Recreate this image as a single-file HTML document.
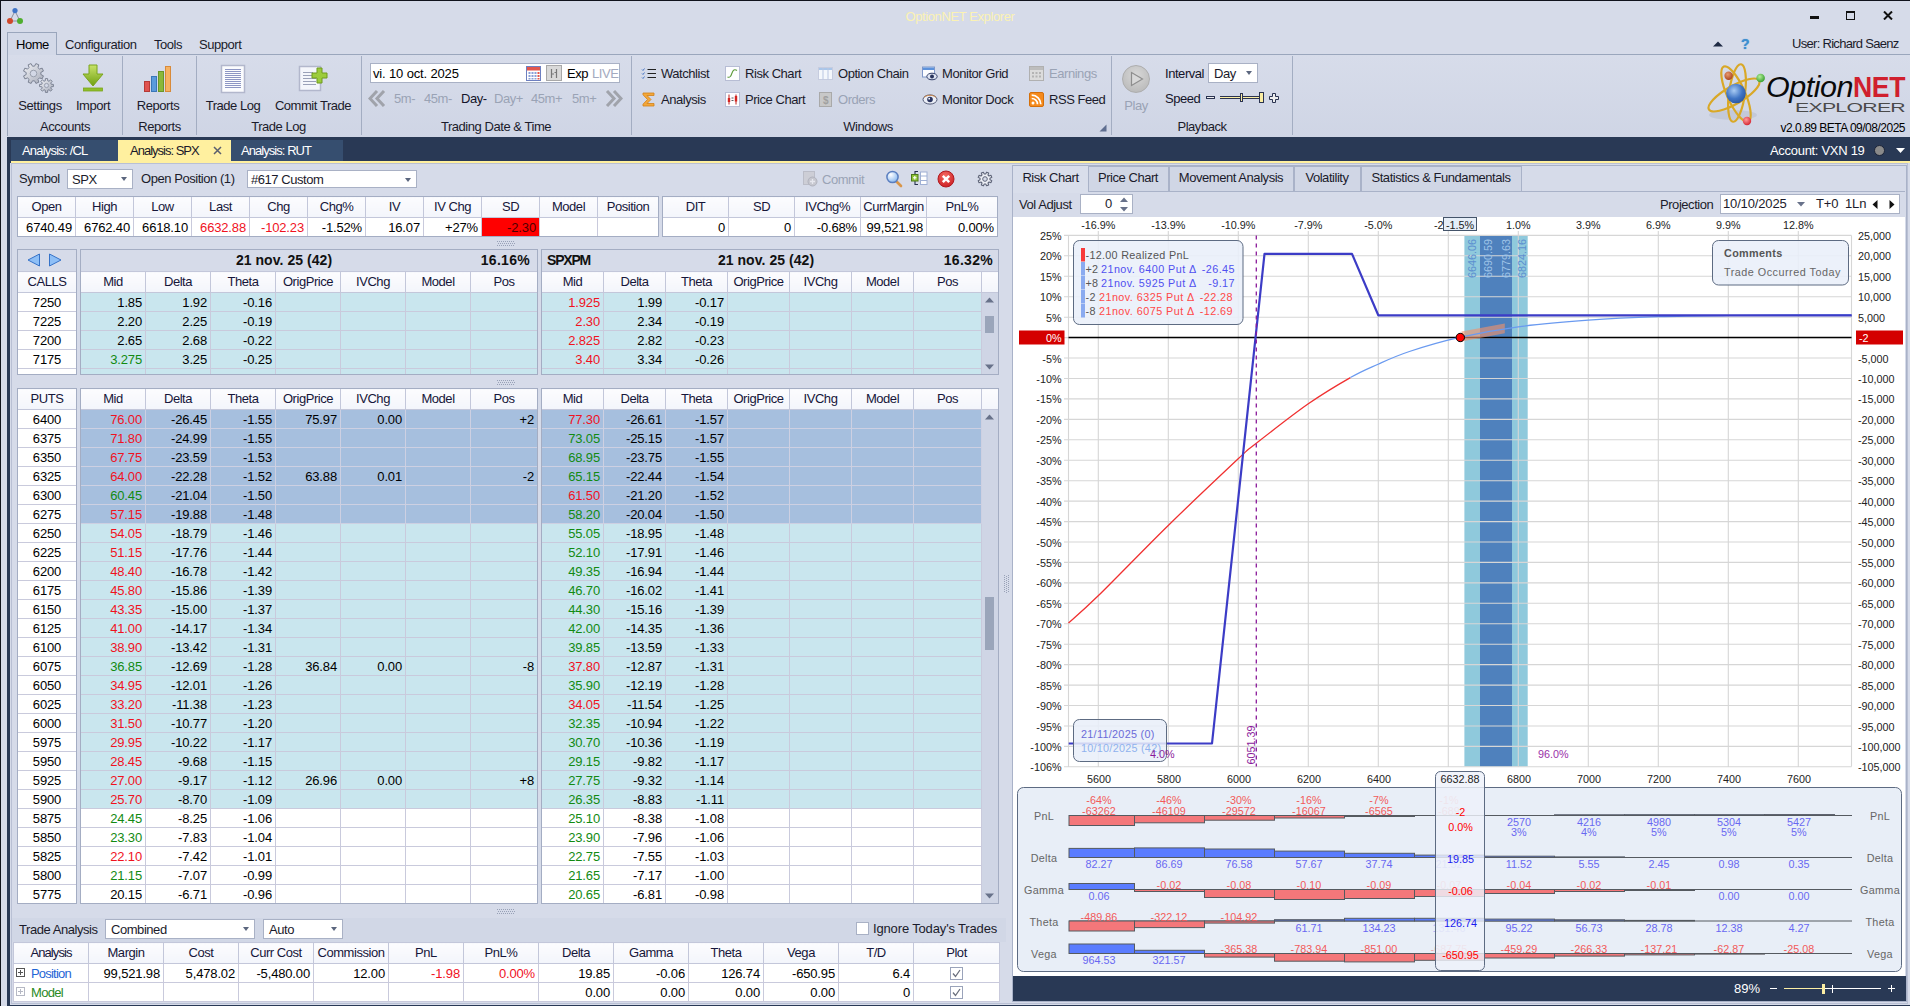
<!DOCTYPE html>
<html><head><meta charset="utf-8"><title>OptionNET Explorer</title>
<style>
*{box-sizing:border-box}
html,body{margin:0;padding:0}
body{width:1910px;height:1006px;overflow:hidden;background:#d6dbe9;font-family:"Liberation Sans",sans-serif;font-size:13px;color:#1b1b2b;letter-spacing:-0.45px;position:relative}
.a{position:absolute;white-space:nowrap}
.t{position:absolute;white-space:nowrap;line-height:16px;height:16px}
.c{text-align:center}
.r{text-align:right}
.n{letter-spacing:-0.15px}
.dim{color:#9aa3b5}
.sep{position:absolute;width:1px;background:#a3adc2;top:56px;height:79px}
.grp{position:absolute;top:119px;height:16px;line-height:16px;text-align:center;white-space:nowrap}
.combo{position:absolute;background:#fff;border:1px solid #a9b1c5;height:20px;line-height:20px;padding-left:5px;white-space:nowrap}
.combo:after{content:"";position:absolute;right:5px;top:7px;border:3.500px solid transparent;border-top:4px solid #5b667e;border-bottom:none}
table{border-collapse:collapse;table-layout:fixed;position:absolute;font-size:13px;letter-spacing:-0.15px}
td{color:#000;border:1px solid #c9cadc;height:19px;padding:0 3px 0 0;text-align:right;white-space:nowrap;overflow:hidden;line-height:17px}
tr.h td{color:#16163a;text-align:center;padding:0 0 2px 0;background:linear-gradient(#fcfcfe,#f3f5fb);height:21px;letter-spacing:-0.45px;border-color:#c3c7da}
.cy td{background:#c9e6ee}
.bl td{background:#a6bfde;border-color:#cdd0e2}
.wh td{background:#fff}
.red{color:#f0121e}
.grn{color:#128a12}
.box{position:absolute;border:1px solid #a4adc3}

</style></head><body>
<!-- window frame -->
<div class="a" style="left:0;top:0;width:1910px;height:1px;background:#10131c"></div>
<div class="a" style="left:0;top:0;width:1px;height:1006px;background:#10131c"></div>
<!-- app icon -->
<svg class="a" style="left:6px;top:7px" width="18" height="18" viewBox="0 0 18 18"><path d="M9 4 L4 14 L14 14 Z" fill="none" stroke="#8a8f9c" stroke-width="1"/><circle cx="9" cy="3.6" r="2.6" fill="#3f74c7"/><circle cx="4" cy="14" r="3" fill="#d0482a"/><circle cx="14" cy="14" r="3" fill="#4fae2e"/></svg>
<div class="t c" style="left:860px;width:200px;top:9px;color:#fbf2b4;letter-spacing:-0.4px">OptionNET Explorer</div>
<!-- window buttons -->
<div class="a" style="left:1810px;top:16px;width:9px;height:3px;background:#111"></div>
<div class="a" style="left:1846px;top:11px;width:9px;height:9px;border:1px solid #111;border-top-width:2px"></div>
<svg class="a" style="left:1883px;top:11px" width="10" height="9" viewBox="0 0 10 9"><path d="M1 0.5 L9 8.5 M9 0.5 L1 8.5" stroke="#111" stroke-width="2"/></svg>
<!-- ribbon tabs -->
<div class="a" style="left:7px;top:54px;width:1903px;height:1px;background:#9aa6bc"></div>
<div class="a" style="left:7px;top:32px;width:50px;height:23px;border:1px solid #9aa6bc;border-bottom:none;background:#d3d9e8"></div>
<div class="t" style="left:16px;top:37px;color:#000">Home</div>
<div class="t" style="left:65px;top:37px">Configuration</div>
<div class="t" style="left:154px;top:37px">Tools</div>
<div class="t" style="left:199px;top:37px">Support</div>
<svg class="a" style="left:1713px;top:41px" width="10" height="6"><path d="M0 5.5 L5 0.5 L10 5.5 Z" fill="#1e2a44"/></svg>
<div class="t" style="left:1741px;top:36px;color:#3f8fd0;font-weight:bold;font-size:14px;text-shadow:0 0 1px #3f8fd0">?</div>
<div class="t" style="left:1792px;top:36px;letter-spacing:-0.7px">User: Richard Saenz</div>
<!-- ribbon body -->
<div class="a" style="left:8px;top:55px;width:1902px;height:82px;background:linear-gradient(#d7dcea,#cfd5e5)"></div>
<div class="a" style="left:7px;top:55px;width:1px;height:81px;background:#9aa6bc"></div>
<div class="sep" style="left:122px"></div><div class="sep" style="left:196px"></div><div class="sep" style="left:361px"></div><div class="sep" style="left:631px"></div><div class="sep" style="left:1111px"></div><div class="sep" style="left:1292px"></div>
<!-- Settings icon -->
<svg class="a" style="left:22px;top:62px" width="34" height="32" viewBox="0 0 34 32"><defs><linearGradient id="gs" x1="0" y1="0" x2="1" y2="1"><stop offset="0" stop-color="#f2f3f7"/><stop offset="1" stop-color="#a6abb9"/></linearGradient></defs>
<path d="M18.83 12.52L21.42 13.85L20.21 16.81L17.43 15.93L15.96 17.41L16.85 20.18L13.91 21.41L12.56 18.82L10.48 18.83L9.15 21.42L6.19 20.21L7.07 17.43L5.59 15.96L2.82 16.85L1.59 13.91L4.18 12.56L4.17 10.48L1.58 9.15L2.79 6.19L5.57 7.07L7.04 5.59L6.15 2.82L9.09 1.59L10.44 4.18L12.52 4.17L13.85 1.58L16.81 2.79L15.93 5.57L17.41 7.04L20.18 6.15L21.41 9.09L18.82 10.44Z" fill="url(#gs)" stroke="#7c8394" stroke-width="1" stroke-linejoin="round"/><circle cx="11.500" cy="11.500" r="3.300" fill="#d3d8e6" stroke="#9aa0ae"/>
<path d="M29.25 22.28L31.41 22.40L31.41 24.60L29.25 24.72L28.72 25.99L30.16 27.61L28.61 29.16L26.99 27.72L25.72 28.25L25.60 30.41L23.40 30.41L23.28 28.25L22.01 27.72L20.39 29.16L18.84 27.61L20.28 25.99L19.75 24.72L17.59 24.60L17.59 22.40L19.75 22.28L20.28 21.01L18.84 19.39L20.39 17.84L22.01 19.28L23.28 18.75L23.40 16.59L25.60 16.59L25.72 18.75L26.99 19.28L28.61 17.84L30.16 19.39L28.72 21.01Z" fill="url(#gs)" stroke="#7c8394" stroke-width="1" stroke-linejoin="round"/><circle cx="24.500" cy="23.500" r="2.100" fill="#d3d8e6" stroke="#9aa0ae"/></svg>
<div class="t c" style="left:9px;width:62px;top:98px">Settings</div>
<!-- Import icon -->
<svg class="a" style="left:82px;top:64px" width="22" height="28" viewBox="0 0 22 28"><defs><linearGradient id="gi" x1="0" y1="0" x2="0" y2="1"><stop offset="0" stop-color="#c9e36a"/><stop offset="1" stop-color="#6fa012"/></linearGradient></defs><path d="M7 1h8v9h6L11 22 1 10h6z" fill="url(#gi)" stroke="#7aa51c" stroke-width="1"/><rect x="1.500" y="24" width="19" height="3" fill="#8fbf2a" stroke="#7aa51c" stroke-width=".8"/></svg>
<div class="t c" style="left:62px;width:62px;top:98px">Import</div>
<div class="grp" style="left:8px;width:114px">Accounts</div>
<!-- Reports icon -->
<svg class="a" style="left:143px;top:65px" width="30" height="28" viewBox="0 0 30 28"><rect x="1.500" y="16.500" width="5" height="10" fill="#e0534f" stroke="#b53a36"/><rect x="8.500" y="11.500" width="5" height="15" fill="#5b9bdc" stroke="#3a77b8"/><rect x="15.500" y="6.500" width="5" height="20" fill="#8ab83a" stroke="#6a962a"/><rect x="22.500" y="1.500" width="5" height="25" fill="#f6b262" stroke="#d88a3a"/></svg>
<div class="t c" style="left:127px;width:62px;top:98px">Reports</div>
<div class="grp" style="left:123px;width:73px">Reports</div>
<!-- Trade Log icon -->
<svg class="a" style="left:220px;top:64px" width="26" height="30" viewBox="0 0 26 30"><rect x="1.500" y="1.500" width="23" height="27" fill="#fbfcfe" stroke="#b2b7cc" stroke-width="1.500"/><g stroke="#8d96c4" stroke-width="1"><path d="M5 5.500h16M5 7.500h16M5 9.500h16M5 11.500h16M5 13.500h16M5 15.500h16M5 17.500h16M5 19.500h16M5 21.500h16M5 23.500h16"/></g></svg>
<div class="t c" style="left:196px;width:74px;top:98px">Trade Log</div>
<!-- Commit Trade icon -->
<svg class="a" style="left:298px;top:64px" width="30" height="30" viewBox="0 0 30 30"><rect x="1.500" y="2.500" width="21" height="24" fill="#f4f6fb" stroke="#b2b7cc" stroke-width="1.500"/><g stroke="#9aa1b8" stroke-width="1"><path d="M5 8.500h10M5 11.500h10M5 14.500h13M5 17.500h13M5 20.500h13"/></g><path d="M19 4h5v5h5v5h-5v5h-5v-5h-5v-5h5z" fill="#9ccc3c" stroke="#6f9a1e" stroke-width="1"/></svg>
<div class="t c" style="left:268px;width:90px;top:98px">Commit Trade</div>
<div class="grp" style="left:197px;width:163px">Trade Log</div>
<!-- Trading date & time -->
<div class="a" style="left:370px;top:63px;width:250px;height:20px;background:#fff;border:1px solid #a9b1c5"></div>
<div class="t n" style="left:373px;top:66px;color:#000">vi. 10 oct. 2025</div>
<svg class="a" style="left:526px;top:66px" width="15" height="15" viewBox="0 0 15 15"><rect x=".5" y=".5" width="14" height="14" fill="#fff" stroke="#6d7fc0"/><rect x="1" y="1" width="13" height="3.500" fill="#e2564c"/><g fill="#8aa0d8"><rect x="2.500" y="6" width="2" height="2"/><rect x="5.500" y="6" width="2" height="2"/><rect x="8.500" y="6" width="2" height="2"/><rect x="2.500" y="9" width="2" height="2"/><rect x="5.500" y="9" width="2" height="2"/><rect x="8.500" y="9" width="2" height="2"/><rect x="2.500" y="12" width="2" height="1.500"/><rect x="5.500" y="12" width="2" height="1.500"/><rect x="8.500" y="12" width="2" height="1.500"/></g><g fill="#e2564c"><rect x="11.500" y="6" width="2" height="2"/><rect x="11.500" y="9" width="2" height="2"/><rect x="11.500" y="12" width="2" height="1.500"/></g></svg>
<div class="a" style="left:546px;top:65px;width:16px;height:16px;background:#d9d9d9;border:1px solid #a8a8a8"></div>
<svg class="a" style="left:549px;top:69px" width="10" height="9"><path d="M2.500 0v9M7.500 0v9M2.500 5h2.500M5.500 3.500h2" stroke="#777" stroke-width="1.200" fill="none"/></svg>
<div class="t" style="left:567px;top:66px;color:#000">Exp</div>
<div class="t" style="left:592px;top:66px;color:#a3aac0">LIVE</div>
<svg class="a" style="left:368px;top:90px" width="18" height="17" viewBox="0 0 18 17"><path d="M9 1 L2 8.500 L9 16 M16 1 L9 8.500 L16 16" fill="none" stroke="#a0a3ab" stroke-width="3"/></svg>
<svg class="a" style="left:605px;top:90px" width="18" height="17" viewBox="0 0 18 17"><path d="M2 1 L9 8.500 L2 16 M9 1 L16 8.500 L9 16" fill="none" stroke="#a0a3ab" stroke-width="3"/></svg>
<div class="t dim" style="left:394px;top:91px">5m-</div>
<div class="t dim" style="left:424px;top:91px">45m-</div>
<div class="t" style="left:461px;top:91px;color:#14142a">Day-</div>
<div class="t dim" style="left:494px;top:91px">Day+</div>
<div class="t dim" style="left:531px;top:91px">45m+</div>
<div class="t dim" style="left:572px;top:91px">5m+</div>
<div class="grp" style="left:361px;width:270px">Trading Date &amp; Time</div>
<!-- Windows group -->
<svg class="a" style="left:641px;top:67px" width="16" height="13"><g stroke="#222" stroke-width="1.200"><path d="M6.500 2.500h8.500M6.500 6.500h8.500M6.500 10.500h8.500"/></g><g fill="none" stroke="#4a78c8" stroke-width="1"><path d="M1 2.500l1 1 1.500-2M1 6.500l1 1 1.500-2M1 10.500l1 1 1.500-2"/></g></svg>
<div class="t" style="left:661px;top:66px">Watchlist</div>
<svg class="a" style="left:642px;top:92px" width="13" height="15" viewBox="0 0 13 15"><path d="M1 1h11v2.500H5l4 4-4 4h7V14H1v-1.800l4.500-4.700L1 2.800z" fill="#f3a73a" stroke="#d28018" stroke-width=".8"/></svg>
<div class="t" style="left:661px;top:92px">Analysis</div>
<svg class="a" style="left:725px;top:66px" width="15" height="15"><rect x=".5" y=".5" width="14" height="14" fill="#fdfdff" stroke="#b7bdd4"/><path d="M2.500 11c2.500 1 3.500-1 4.500-4s2.500-4 5-2.500" fill="none" stroke="#5b9a3a" stroke-width="1.100"/></svg>
<div class="t" style="left:745px;top:66px">Risk Chart</div>
<svg class="a" style="left:725px;top:92px" width="15" height="15"><rect x=".5" y=".5" width="14" height="14" fill="#fdfdff" stroke="#b7bdd4"/><path d="M4 2.500v10M11 2.500v10" stroke="#c0201c" stroke-width="1"/><rect x="2.800" y="6" width="2.400" height="4" fill="#d4231f"/><rect x="9.800" y="4" width="2.400" height="5.500" fill="#d4231f"/><path d="M6.500 6h2M6.500 8.500h2" stroke="#333" stroke-width=".8"/></svg>
<div class="t" style="left:745px;top:92px">Price Chart</div>
<svg class="a" style="left:818px;top:67px" width="15" height="13"><rect x=".5" y=".5" width="14" height="12" fill="#f4f7fc" stroke="#c6ccdf"/><rect x="1" y="1" width="13" height="2" fill="#a9c6ea"/><path d="M5 1v11.500M10 1v11.500" stroke="#b9c6e2"/></svg>
<div class="t" style="left:838px;top:66px">Option Chain</div>
<svg class="a" style="left:819px;top:92px" width="13" height="15"><rect x=".5" y=".5" width="12" height="14" fill="#c8c8c8" stroke="#a9a9a9"/><text x="6.500" y="11.500" font-size="10" font-family="Liberation Sans" font-weight="bold" text-anchor="middle" fill="#a0a0a0">$</text></svg>
<div class="t dim" style="left:838px;top:92px">Orders</div>
<svg class="a" style="left:922px;top:66px" width="16" height="15"><rect x=".5" y="1" width="12" height="10" fill="#fbfcff" stroke="#7f97c8"/><rect x="1" y="1.500" width="11" height="2.500" fill="#5d92dc"/><ellipse cx="10" cy="10.500" rx="5.200" ry="3.300" fill="#dfe5f3" stroke="#34406a"/><circle cx="10" cy="10.500" r="2" fill="#28335c"/></svg>
<div class="t" style="left:942px;top:66px">Monitor Grid</div>
<svg class="a" style="left:922px;top:93px" width="16" height="13"><ellipse cx="8" cy="6.500" rx="7" ry="4.600" fill="#eceff7" stroke="#555c78"/><path d="M2 4.500c3-3 9-3 12 0" stroke="#d08a4a" fill="none"/><circle cx="8" cy="6.500" r="2.800" fill="#2b3560"/><circle cx="7.200" cy="5.700" r=".9" fill="#fff"/></svg>
<div class="t" style="left:942px;top:92px">Monitor Dock</div>
<svg class="a" style="left:1029px;top:66px" width="15" height="15"><rect x=".5" y=".5" width="14" height="14" fill="#dcdcdc" stroke="#b0b0b0"/><rect x="1" y="1" width="13" height="3" fill="#bdbdbd"/><g fill="#b4b4b4"><rect x="3" y="6" width="2" height="2"/><rect x="6.500" y="6" width="2" height="2"/><rect x="10" y="6" width="2" height="2"/><rect x="3" y="9.500" width="2" height="2"/><rect x="6.500" y="9.500" width="2" height="2"/><rect x="10" y="9.500" width="2" height="2"/></g></svg>
<div class="t dim" style="left:1049px;top:66px">Earnings</div>
<svg class="a" style="left:1029px;top:92px" width="15" height="15"><rect x=".5" y=".5" width="14" height="14" rx="1.500" fill="#f58a1c" stroke="#d46f0a"/><circle cx="4" cy="11" r="1.500" fill="#fff"/><path d="M2.700 6.500a5.800 5.800 0 0 1 5.800 5.800M2.700 3.200a9.100 9.100 0 0 1 9.100 9.100" stroke="#fff" stroke-width="1.700" fill="none"/></svg>
<div class="t" style="left:1049px;top:92px">RSS Feed</div>
<div class="grp" style="left:632px;width:472px">Windows</div>
<svg class="a" style="left:1099px;top:124px" width="8" height="8"><path d="M7.500 0.500V7.500H0.500Z" fill="#5f6e90"/></svg>
<!-- Playback -->
<div class="a" style="left:1122px;top:65px;width:28px;height:28px;border-radius:50%;background:radial-gradient(circle at 50% 35%,#d8d8d8,#b4b4b4);border:1px solid #adadad"></div>
<svg class="a" style="left:1130px;top:71px" width="14" height="16"><path d="M1.500 1.500v13l11-6.500z" fill="#d9d9d9" stroke="#8e8e8e" stroke-width="1.200"/></svg>
<div class="t dim c" style="left:1115px;width:42px;top:98px">Play</div>
<div class="t" style="left:1165px;top:66px;color:#14142a">Interval</div>
<div class="combo" style="left:1208px;top:63px;width:50px">Day</div>
<div class="t" style="left:1165px;top:91px;color:#14142a">Speed</div>
<div class="a" style="left:1206px;top:96px;width:9px;height:3px;border:1px solid #2a3350;background:#eee"></div>
<div class="a" style="left:1220px;top:96px;width:42px;height:3px;border:1px solid #2a3350;background:#fbeea4;border-left:none;border-right:none"></div>
<div class="a" style="left:1240px;top:93px;width:3px;height:9px;border:1px solid #2a3350;background:#fbeea4"></div>
<div class="a" style="left:1259px;top:92px;width:5px;height:11px;border:1px solid #2a3350;background:#fbeea4"></div>
<svg class="a" style="left:1269px;top:93px" width="10" height="10"><path d="M3.500 .5h3v3h3v3h-3v3h-3v-3h-3v-3h3z" fill="#eee" stroke="#2a3350"/></svg>
<div class="grp" style="left:1112px;width:180px">Playback</div>
<!-- Logo -->
<svg class="a" style="left:1700px;top:58px" width="210" height="78" viewBox="0 0 210 78">
<defs><radialGradient id="gb" cx=".4" cy=".35" r=".7"><stop offset="0" stop-color="#a9cbf3"/><stop offset=".6" stop-color="#3f74c4"/><stop offset="1" stop-color="#2a55a0"/></radialGradient>
<radialGradient id="gr" cx=".4" cy=".35" r=".7"><stop offset="0" stop-color="#ff9a9a"/><stop offset="1" stop-color="#d3202c"/></radialGradient>
<radialGradient id="gg" cx=".4" cy=".35" r=".7"><stop offset="0" stop-color="#b4f09a"/><stop offset="1" stop-color="#2f9a28"/></radialGradient>
<radialGradient id="go" cx=".4" cy=".35" r=".7"><stop offset="0" stop-color="#e89a70"/><stop offset="1" stop-color="#a8401c"/></radialGradient></defs>
<ellipse cx="33" cy="57" rx="24" ry="5" fill="#b9bfd0" opacity=".6"/>
<g fill="none" stroke="#d9a827" stroke-width="2.200"><ellipse cx="36" cy="36" rx="9" ry="30" transform="rotate(-24 36 36)"/><ellipse cx="34" cy="37" rx="9" ry="29" transform="rotate(60 34 37)"/><ellipse cx="37" cy="35" rx="8" ry="29" transform="rotate(8 37 35)"/></g>
<circle cx="36" cy="35.500" r="9.800" fill="url(#gb)"/><circle cx="28.600" cy="17.700" r="4.200" fill="url(#go)"/><circle cx="60.600" cy="20" r="4.300" fill="url(#gg)"/><circle cx="47" cy="63" r="4.200" fill="url(#gr)"/>
<text x="66" y="39" font-family="Liberation Sans" font-style="italic" font-size="29" fill="#0a0a0a" textLength="87" lengthAdjust="spacingAndGlyphs">Option</text>
<text x="153" y="39" font-family="Liberation Sans" font-weight="bold" font-size="29" fill="#d01f2e" textLength="52" lengthAdjust="spacingAndGlyphs">NET</text>
<text x="95" y="53.700" font-family="Liberation Sans" font-size="13.500" fill="#4a4a4a" textLength="110" lengthAdjust="spacingAndGlyphs">EXPLORER</text>
</svg>
<div class="t r" style="left:1760px;width:145px;top:120px;color:#000;font-size:12px;letter-spacing:-0.5px">v2.0.89 BETA 09/08/2025</div>
<!-- dark bar with doc tabs -->
<div class="a" style="left:7px;top:137px;width:1903px;height:26px;background:#293955"></div>
<div class="a" style="left:7px;top:137px;width:3px;height:869px;background:#293955"></div>
<div class="a" style="left:11px;top:140px;width:107px;height:21px;background:#364e6f"></div>
<div class="a" style="left:118px;top:140px;width:113px;height:23px;background:#fff09f"></div>
<div class="a" style="left:231px;top:140px;width:112px;height:21px;background:#364e6f"></div>
<div class="a" style="left:11px;top:161px;width:1899px;height:2px;background:#fff09f"></div>
<div class="t" style="left:22px;top:143px;color:#fff;letter-spacing:-0.8px">Analysis: /CL</div>
<div class="t" style="left:130px;top:143px;color:#1a1a2a;letter-spacing:-1px">Analysis: SPX</div>
<svg class="a" style="left:213px;top:146px" width="9" height="9"><path d="M1 1l7 7M8 1l-7 7" stroke="#5a5f6e" stroke-width="1.500"/></svg>
<div class="t" style="left:241px;top:143px;color:#fff;letter-spacing:-0.95px">Analysis: RUT</div>
<div class="t" style="left:1770px;top:143px;color:#fff;letter-spacing:-0.3px">Account: VXN 19</div>
<div class="a" style="left:1874px;top:145px;width:11px;height:11px;border-radius:50%;background:#8a8a8a;border:1px solid #1c2438"></div>
<svg class="a" style="left:1896px;top:148px" width="9" height="5"><path d="M0 0h9l-4.500 5z" fill="#fff"/></svg>
<div class="a" style="left:11px;top:163px;width:1897px;height:840px;border:1px solid #b9c0d4;border-right:none;border-bottom:none"></div>
<div class="t" style="left:19px;top:171px">Symbol</div>
<div class="combo" style="left:67px;top:169px;width:66px;padding-left:4px">SPX</div>
<div class="t" style="left:141px;top:171px">Open Position (1)</div>
<div class="combo" style="left:247px;top:170px;width:170px;height:18px;line-height:17px;padding-left:3px">#617 Custom</div>
<svg class="a" style="left:803px;top:171px" width="15" height="16"><rect x=".5" y=".5" width="11" height="13" fill="#cdced6" stroke="#bbbdc8"/><circle cx="9.500" cy="10.500" r="4.500" fill="#c6c7cf" stroke="#b0b2bd"/><path d="M7 10.500h5M9.500 8v5" stroke="#e6e7ee" stroke-width="1.300"/></svg>
<div class="t dim" style="left:822px;top:172px">Commit</div>
<svg class="a" style="left:885px;top:170px" width="18" height="18"><defs><radialGradient id="gm" cx=".35" cy=".3" r=".8"><stop offset="0" stop-color="#fff"/><stop offset="1" stop-color="#7fb2ee"/></radialGradient></defs><path d="M11 11l5 5" stroke="#d9964a" stroke-width="2.600" stroke-linecap="round"/><circle cx="7.500" cy="7" r="5.600" fill="url(#gm)" stroke="#5b7fc0" stroke-width="1.500"/></svg>
<svg class="a" style="left:911px;top:171px" width="17" height="15"><path d="M7 .5h-3v13h3" fill="none" stroke="#27314f" stroke-width="1.100"/><rect x="9.500" y="1" width="6.500" height="12.500" fill="#fff" stroke="#9fb0d4"/><path d="M9.500 5h6.500M9.500 9.500h6.500" stroke="#9fb0d4" stroke-width="1"/><rect x=".5" y="3.500" width="6.500" height="6.500" fill="#8fc43a" stroke="#4d7a18"/><path d="M2 6.800h3.500M3.800 5v3.500" stroke="#fff" stroke-width="1.100"/></svg>
<svg class="a" style="left:937px;top:170px" width="18" height="18"><defs><radialGradient id="gx" cx=".45" cy=".3" r=".8"><stop offset="0" stop-color="#f46a62"/><stop offset="1" stop-color="#c8161c"/></radialGradient></defs><circle cx="9" cy="9" r="8" fill="url(#gx)" stroke="#b01a20"/><path d="M5.800 5.800l6.400 6.400M12.200 5.800l-6.400 6.400" stroke="#fff" stroke-width="2.500"/></svg>
<svg class="a" style="left:977px;top:171px" width="16" height="16" viewBox="0 0 16 16"><path d="M12.95 8.69L14.81 9.62L13.98 11.64L12.01 10.99L11.01 11.99L11.67 13.96L9.65 14.80L8.72 12.95L7.31 12.95L6.38 14.81L4.36 13.98L5.01 12.01L4.01 11.01L2.04 11.67L1.20 9.65L3.05 8.72L3.05 7.31L1.19 6.38L2.02 4.36L3.99 5.01L4.99 4.01L4.33 2.04L6.35 1.20L7.28 3.05L8.69 3.05L9.62 1.19L11.64 2.02L10.99 3.99L11.99 4.99L13.96 4.33L14.80 6.35L12.95 7.28Z" fill="#eef0f6" stroke="#5f6579" stroke-width="1.100" stroke-linejoin="round"/><circle cx="8" cy="8" r="2.300" fill="#d6dbe9" stroke="#5f6579" stroke-width="1"/></svg>
<table style="left:17px;top:196px;width:642px;"><colgroup><col style="width:58px"><col style="width:58px"><col style="width:58px"><col style="width:58px"><col style="width:58px"><col style="width:58px"><col style="width:58px"><col style="width:58px"><col style="width:58px"><col style="width:58px"><col style="width:61px"></colgroup><tr class="h" style="height:21px"><td style="height:21px">Open</td><td style="height:21px">High</td><td style="height:21px">Low</td><td style="height:21px">Last</td><td style="height:21px">Chg</td><td style="height:21px">Chg%</td><td style="height:21px">IV</td><td style="height:21px">IV Chg</td><td style="height:21px">SD</td><td style="height:21px">Model</td><td style="height:21px">Position</td></tr><tr class="wh" style="height:19px"><td style="height:19px">6740.49</td><td style="height:19px">6762.40</td><td style="height:19px">6618.10</td><td class="red" style="height:19px">6632.88</td><td class="red" style="height:19px">-102.23</td><td style="height:19px">-1.52%</td><td style="height:19px">16.07</td><td style="height:19px">+27%</td><td style="height:19px;background:#f00;color:#500000">-2.30</td><td style="height:19px"></td><td style="height:19px"></td></tr></table>
<table style="left:662px;top:196px;width:336px;"><colgroup><col style="width:66px"><col style="width:66px"><col style="width:66px"><col style="width:66px"><col style="width:71px"></colgroup><tr class="h" style="height:21px"><td style="height:21px">DIT</td><td style="height:21px">SD</td><td style="height:21px">IVChg%</td><td style="height:21px">CurrMargin</td><td style="height:21px">PnL%</td></tr><tr class="wh" style="height:19px"><td style="height:19px">0</td><td style="height:19px">0</td><td style="height:19px">-0.68%</td><td style="height:19px">99,521.98</td><td style="height:19px">0.00%</td></tr></table>
<svg class="a" style="left:497px;top:241px" width="19" height="5" fill="#98a1b7"><rect x="0" y="0" width="1" height="1"/><rect x="2" y="0" width="1" height="1"/><rect x="4" y="0" width="1" height="1"/><rect x="6" y="0" width="1" height="1"/><rect x="8" y="0" width="1" height="1"/><rect x="10" y="0" width="1" height="1"/><rect x="12" y="0" width="1" height="1"/><rect x="14" y="0" width="1" height="1"/><rect x="16" y="0" width="1" height="1"/><rect x="1" y="2" width="1" height="1"/><rect x="3" y="2" width="1" height="1"/><rect x="5" y="2" width="1" height="1"/><rect x="7" y="2" width="1" height="1"/><rect x="9" y="2" width="1" height="1"/><rect x="11" y="2" width="1" height="1"/><rect x="13" y="2" width="1" height="1"/><rect x="15" y="2" width="1" height="1"/><rect x="17" y="2" width="1" height="1"/><rect x="0" y="4" width="1" height="1"/><rect x="2" y="4" width="1" height="1"/><rect x="4" y="4" width="1" height="1"/><rect x="6" y="4" width="1" height="1"/><rect x="8" y="4" width="1" height="1"/><rect x="10" y="4" width="1" height="1"/><rect x="12" y="4" width="1" height="1"/><rect x="14" y="4" width="1" height="1"/><rect x="16" y="4" width="1" height="1"/></svg>
<svg class="a" style="left:497px;top:380px" width="19" height="5" fill="#98a1b7"><rect x="0" y="0" width="1" height="1"/><rect x="2" y="0" width="1" height="1"/><rect x="4" y="0" width="1" height="1"/><rect x="6" y="0" width="1" height="1"/><rect x="8" y="0" width="1" height="1"/><rect x="10" y="0" width="1" height="1"/><rect x="12" y="0" width="1" height="1"/><rect x="14" y="0" width="1" height="1"/><rect x="16" y="0" width="1" height="1"/><rect x="1" y="2" width="1" height="1"/><rect x="3" y="2" width="1" height="1"/><rect x="5" y="2" width="1" height="1"/><rect x="7" y="2" width="1" height="1"/><rect x="9" y="2" width="1" height="1"/><rect x="11" y="2" width="1" height="1"/><rect x="13" y="2" width="1" height="1"/><rect x="15" y="2" width="1" height="1"/><rect x="17" y="2" width="1" height="1"/><rect x="0" y="4" width="1" height="1"/><rect x="2" y="4" width="1" height="1"/><rect x="4" y="4" width="1" height="1"/><rect x="6" y="4" width="1" height="1"/><rect x="8" y="4" width="1" height="1"/><rect x="10" y="4" width="1" height="1"/><rect x="12" y="4" width="1" height="1"/><rect x="14" y="4" width="1" height="1"/><rect x="16" y="4" width="1" height="1"/></svg>
<svg class="a" style="left:497px;top:909px" width="19" height="5" fill="#98a1b7"><rect x="0" y="0" width="1" height="1"/><rect x="2" y="0" width="1" height="1"/><rect x="4" y="0" width="1" height="1"/><rect x="6" y="0" width="1" height="1"/><rect x="8" y="0" width="1" height="1"/><rect x="10" y="0" width="1" height="1"/><rect x="12" y="0" width="1" height="1"/><rect x="14" y="0" width="1" height="1"/><rect x="16" y="0" width="1" height="1"/><rect x="1" y="2" width="1" height="1"/><rect x="3" y="2" width="1" height="1"/><rect x="5" y="2" width="1" height="1"/><rect x="7" y="2" width="1" height="1"/><rect x="9" y="2" width="1" height="1"/><rect x="11" y="2" width="1" height="1"/><rect x="13" y="2" width="1" height="1"/><rect x="15" y="2" width="1" height="1"/><rect x="17" y="2" width="1" height="1"/><rect x="0" y="4" width="1" height="1"/><rect x="2" y="4" width="1" height="1"/><rect x="4" y="4" width="1" height="1"/><rect x="6" y="4" width="1" height="1"/><rect x="8" y="4" width="1" height="1"/><rect x="10" y="4" width="1" height="1"/><rect x="12" y="4" width="1" height="1"/><rect x="14" y="4" width="1" height="1"/><rect x="16" y="4" width="1" height="1"/></svg>
<div class="box" style="left:17px;top:249px;width:60px;height:126px;background:#fff;overflow:hidden"></div>
<div class="a" style="left:18px;top:250px;width:58px;height:21px;background:#d6dbe9"></div>
<svg class="a" style="left:27px;top:253px" width="36" height="14"><path d="M12.500 1v12L1 7z" fill="#8ebff6" stroke="#3572c8"/><path d="M22.500 1v12L34 7z" fill="#8ebff6" stroke="#3572c8"/></svg>
<table style="left:17px;top:271px;width:60px;overflow:hidden"><colgroup><col style="width:59px"></colgroup><tr class="h" style="height:21px"><td style="height:21px">CALLS</td></tr><tr class="wh" style="height:19px"><td style="height:19px;text-align:center;padding:0;height:19px">7250</td></tr><tr class="wh" style="height:19px"><td style="height:19px;text-align:center;padding:0;height:19px">7225</td></tr><tr class="wh" style="height:19px"><td style="height:19px;text-align:center;padding:0;height:19px">7200</td></tr><tr class="wh" style="height:19px"><td style="height:19px;text-align:center;padding:0;height:19px">7175</td></tr><tr class="wh" style="height:6px"><td style="height:6px;text-align:center;padding:0;height:6px"></td></tr></table>
<div class="box" style="left:80px;top:249px;width:458px;height:126px;background:#c9e6ee"></div>
<div class="a" style="left:81px;top:250px;width:456px;height:21px;background:#d6dbe9"></div>
<div class="t c" style="left:206px;width:156px;top:252px;font-weight:bold;font-size:14px;color:#111;letter-spacing:0.05px">21 nov. 25 (42)</div>
<div class="t r" style="left:450px;width:80px;top:252px;font-weight:bold;font-size:14px;color:#111;letter-spacing:0.3px">16.16%</div>
<table style="left:80px;top:271px;width:458px;"><colgroup><col style="width:65px"><col style="width:65px"><col style="width:65px"><col style="width:65px"><col style="width:65px"><col style="width:65px"><col style="width:67px"></colgroup><tr class="h" style="height:21px"><td style="height:21px">Mid</td><td style="height:21px">Delta</td><td style="height:21px">Theta</td><td style="height:21px">OrigPrice</td><td style="height:21px">IVChg</td><td style="height:21px">Model</td><td style="height:21px">Pos</td></tr><tr class="cy" style="height:19px"><td style="height:19px">1.85</td><td style="height:19px">1.92</td><td style="height:19px">-0.16</td><td style="height:19px"></td><td style="height:19px"></td><td style="height:19px"></td><td style="height:19px"></td></tr><tr class="cy" style="height:19px"><td style="height:19px">2.20</td><td style="height:19px">2.25</td><td style="height:19px">-0.19</td><td style="height:19px"></td><td style="height:19px"></td><td style="height:19px"></td><td style="height:19px"></td></tr><tr class="cy" style="height:19px"><td style="height:19px">2.65</td><td style="height:19px">2.68</td><td style="height:19px">-0.22</td><td style="height:19px"></td><td style="height:19px"></td><td style="height:19px"></td><td style="height:19px"></td></tr><tr class="cy" style="height:19px"><td class="grn" style="height:19px">3.275</td><td style="height:19px">3.25</td><td style="height:19px">-0.25</td><td style="height:19px"></td><td style="height:19px"></td><td style="height:19px"></td><td style="height:19px"></td></tr><tr class="cy" style="height:6px"><td style="height:6px"></td><td style="height:6px"></td><td style="height:6px"></td><td style="height:6px"></td><td style="height:6px"></td><td style="height:6px"></td><td style="height:6px"></td></tr></table>
<div class="box" style="left:541px;top:249px;width:458px;height:126px;background:#d6dbe9"></div>
<div class="t" style="left:547px;top:252px;font-weight:bold;font-size:14px;color:#111;letter-spacing:-1.2px">SPXPM</div>
<div class="t c" style="left:688px;width:156px;top:252px;font-weight:bold;font-size:14px;color:#111;letter-spacing:0.05px">21 nov. 25 (42)</div>
<div class="t r" style="left:913px;width:80px;top:252px;font-weight:bold;font-size:14px;color:#111;letter-spacing:0.3px">16.32%</div>
<table style="left:541px;top:271px;width:458px;"><colgroup><col style="width:62px"><col style="width:62px"><col style="width:62px"><col style="width:62px"><col style="width:62px"><col style="width:62px"><col style="width:68px"><col style="width:17px"></colgroup><tr class="h" style="height:21px"><td style="height:21px">Mid</td><td style="height:21px">Delta</td><td style="height:21px">Theta</td><td style="height:21px">OrigPrice</td><td style="height:21px">IVChg</td><td style="height:21px">Model</td><td style="height:21px">Pos</td><td style="height:21px"></td></tr><tr class="cy" style="height:19px"><td class="red" style="height:19px">1.925</td><td style="height:19px">1.99</td><td style="height:19px">-0.17</td><td style="height:19px"></td><td style="height:19px"></td><td style="height:19px"></td><td style="height:19px"></td><td style="height:19px;background:#cfd5e5;border-color:#cfd5e5;border-right-color:#a4adc3"></td></tr><tr class="cy" style="height:19px"><td class="red" style="height:19px">2.30</td><td style="height:19px">2.34</td><td style="height:19px">-0.19</td><td style="height:19px"></td><td style="height:19px"></td><td style="height:19px"></td><td style="height:19px"></td><td style="height:19px;background:#cfd5e5;border-color:#cfd5e5;border-right-color:#a4adc3"></td></tr><tr class="cy" style="height:19px"><td class="red" style="height:19px">2.825</td><td style="height:19px">2.82</td><td style="height:19px">-0.23</td><td style="height:19px"></td><td style="height:19px"></td><td style="height:19px"></td><td style="height:19px"></td><td style="height:19px;background:#cfd5e5;border-color:#cfd5e5;border-right-color:#a4adc3"></td></tr><tr class="cy" style="height:19px"><td class="red" style="height:19px">3.40</td><td style="height:19px">3.34</td><td style="height:19px">-0.26</td><td style="height:19px"></td><td style="height:19px"></td><td style="height:19px"></td><td style="height:19px"></td><td style="height:19px;background:#cfd5e5;border-color:#cfd5e5;border-right-color:#a4adc3"></td></tr><tr class="cy" style="height:6px"><td style="height:6px"></td><td style="height:6px"></td><td style="height:6px"></td><td style="height:6px"></td><td style="height:6px"></td><td style="height:6px"></td><td style="height:6px"></td><td style="height:6px;background:#cfd5e5;border-color:#cfd5e5;border-right-color:#a4adc3"></td></tr></table>
<svg class="a" style="left:985px;top:297px" width="10" height="6"><path d="M0 5.500h9L4.500 .5z" fill="#68728a"/></svg>
<div class="a" style="left:985px;top:316px;width:9px;height:17px;background:#9aa5ba"></div>
<svg class="a" style="left:985px;top:364px" width="10" height="6"><path d="M0 .5h9L4.500 5.500z" fill="#68728a"/></svg>
<table style="left:17px;top:388px;width:60px;"><colgroup><col style="width:59px"></colgroup><tr class="h" style="height:21px"><td style="height:21px">PUTS</td></tr><tr class="wh" style="height:19px"><td style="height:19px;text-align:center;padding:0;height:19px">6400</td></tr><tr class="wh" style="height:19px"><td style="height:19px;text-align:center;padding:0;height:19px">6375</td></tr><tr class="wh" style="height:19px"><td style="height:19px;text-align:center;padding:0;height:19px">6350</td></tr><tr class="wh" style="height:19px"><td style="height:19px;text-align:center;padding:0;height:19px">6325</td></tr><tr class="wh" style="height:19px"><td style="height:19px;text-align:center;padding:0;height:19px">6300</td></tr><tr class="wh" style="height:19px"><td style="height:19px;text-align:center;padding:0;height:19px">6275</td></tr><tr class="wh" style="height:19px"><td style="height:19px;text-align:center;padding:0;height:19px">6250</td></tr><tr class="wh" style="height:19px"><td style="height:19px;text-align:center;padding:0;height:19px">6225</td></tr><tr class="wh" style="height:19px"><td style="height:19px;text-align:center;padding:0;height:19px">6200</td></tr><tr class="wh" style="height:19px"><td style="height:19px;text-align:center;padding:0;height:19px">6175</td></tr><tr class="wh" style="height:19px"><td style="height:19px;text-align:center;padding:0;height:19px">6150</td></tr><tr class="wh" style="height:19px"><td style="height:19px;text-align:center;padding:0;height:19px">6125</td></tr><tr class="wh" style="height:19px"><td style="height:19px;text-align:center;padding:0;height:19px">6100</td></tr><tr class="wh" style="height:19px"><td style="height:19px;text-align:center;padding:0;height:19px">6075</td></tr><tr class="wh" style="height:19px"><td style="height:19px;text-align:center;padding:0;height:19px">6050</td></tr><tr class="wh" style="height:19px"><td style="height:19px;text-align:center;padding:0;height:19px">6025</td></tr><tr class="wh" style="height:19px"><td style="height:19px;text-align:center;padding:0;height:19px">6000</td></tr><tr class="wh" style="height:19px"><td style="height:19px;text-align:center;padding:0;height:19px">5975</td></tr><tr class="wh" style="height:19px"><td style="height:19px;text-align:center;padding:0;height:19px">5950</td></tr><tr class="wh" style="height:19px"><td style="height:19px;text-align:center;padding:0;height:19px">5925</td></tr><tr class="wh" style="height:19px"><td style="height:19px;text-align:center;padding:0;height:19px">5900</td></tr><tr class="wh" style="height:19px"><td style="height:19px;text-align:center;padding:0;height:19px">5875</td></tr><tr class="wh" style="height:19px"><td style="height:19px;text-align:center;padding:0;height:19px">5850</td></tr><tr class="wh" style="height:19px"><td style="height:19px;text-align:center;padding:0;height:19px">5825</td></tr><tr class="wh" style="height:19px"><td style="height:19px;text-align:center;padding:0;height:19px">5800</td></tr><tr class="wh" style="height:19px"><td style="height:19px;text-align:center;padding:0;height:19px">5775</td></tr></table>
<table style="left:80px;top:388px;width:458px;"><colgroup><col style="width:65px"><col style="width:65px"><col style="width:65px"><col style="width:65px"><col style="width:65px"><col style="width:65px"><col style="width:67px"></colgroup><tr class="h" style="height:21px"><td style="height:21px">Mid</td><td style="height:21px">Delta</td><td style="height:21px">Theta</td><td style="height:21px">OrigPrice</td><td style="height:21px">IVChg</td><td style="height:21px">Model</td><td style="height:21px">Pos</td></tr><tr class="bl" style="height:19px"><td class="red" style="height:19px">76.00</td><td style="height:19px">-26.45</td><td style="height:19px">-1.55</td><td style="height:19px">75.97</td><td style="height:19px">0.00</td><td style="height:19px"></td><td style="height:19px">+2</td></tr><tr class="bl" style="height:19px"><td class="red" style="height:19px">71.80</td><td style="height:19px">-24.99</td><td style="height:19px">-1.55</td><td style="height:19px"></td><td style="height:19px"></td><td style="height:19px"></td><td style="height:19px"></td></tr><tr class="bl" style="height:19px"><td class="red" style="height:19px">67.75</td><td style="height:19px">-23.59</td><td style="height:19px">-1.53</td><td style="height:19px"></td><td style="height:19px"></td><td style="height:19px"></td><td style="height:19px"></td></tr><tr class="bl" style="height:19px"><td class="red" style="height:19px">64.00</td><td style="height:19px">-22.28</td><td style="height:19px">-1.52</td><td style="height:19px">63.88</td><td style="height:19px">0.01</td><td style="height:19px"></td><td style="height:19px">-2</td></tr><tr class="bl" style="height:19px"><td class="grn" style="height:19px">60.45</td><td style="height:19px">-21.04</td><td style="height:19px">-1.50</td><td style="height:19px"></td><td style="height:19px"></td><td style="height:19px"></td><td style="height:19px"></td></tr><tr class="bl" style="height:19px"><td class="red" style="height:19px">57.15</td><td style="height:19px">-19.88</td><td style="height:19px">-1.48</td><td style="height:19px"></td><td style="height:19px"></td><td style="height:19px"></td><td style="height:19px"></td></tr><tr class="cy" style="height:19px"><td class="red" style="height:19px">54.05</td><td style="height:19px">-18.79</td><td style="height:19px">-1.46</td><td style="height:19px"></td><td style="height:19px"></td><td style="height:19px"></td><td style="height:19px"></td></tr><tr class="cy" style="height:19px"><td class="red" style="height:19px">51.15</td><td style="height:19px">-17.76</td><td style="height:19px">-1.44</td><td style="height:19px"></td><td style="height:19px"></td><td style="height:19px"></td><td style="height:19px"></td></tr><tr class="cy" style="height:19px"><td class="red" style="height:19px">48.40</td><td style="height:19px">-16.78</td><td style="height:19px">-1.42</td><td style="height:19px"></td><td style="height:19px"></td><td style="height:19px"></td><td style="height:19px"></td></tr><tr class="cy" style="height:19px"><td class="red" style="height:19px">45.80</td><td style="height:19px">-15.86</td><td style="height:19px">-1.39</td><td style="height:19px"></td><td style="height:19px"></td><td style="height:19px"></td><td style="height:19px"></td></tr><tr class="cy" style="height:19px"><td class="red" style="height:19px">43.35</td><td style="height:19px">-15.00</td><td style="height:19px">-1.37</td><td style="height:19px"></td><td style="height:19px"></td><td style="height:19px"></td><td style="height:19px"></td></tr><tr class="cy" style="height:19px"><td class="red" style="height:19px">41.00</td><td style="height:19px">-14.17</td><td style="height:19px">-1.34</td><td style="height:19px"></td><td style="height:19px"></td><td style="height:19px"></td><td style="height:19px"></td></tr><tr class="cy" style="height:19px"><td class="red" style="height:19px">38.90</td><td style="height:19px">-13.42</td><td style="height:19px">-1.31</td><td style="height:19px"></td><td style="height:19px"></td><td style="height:19px"></td><td style="height:19px"></td></tr><tr class="cy" style="height:19px"><td class="grn" style="height:19px">36.85</td><td style="height:19px">-12.69</td><td style="height:19px">-1.28</td><td style="height:19px">36.84</td><td style="height:19px">0.00</td><td style="height:19px"></td><td style="height:19px">-8</td></tr><tr class="cy" style="height:19px"><td class="red" style="height:19px">34.95</td><td style="height:19px">-12.01</td><td style="height:19px">-1.26</td><td style="height:19px"></td><td style="height:19px"></td><td style="height:19px"></td><td style="height:19px"></td></tr><tr class="cy" style="height:19px"><td class="red" style="height:19px">33.20</td><td style="height:19px">-11.38</td><td style="height:19px">-1.23</td><td style="height:19px"></td><td style="height:19px"></td><td style="height:19px"></td><td style="height:19px"></td></tr><tr class="cy" style="height:19px"><td class="red" style="height:19px">31.50</td><td style="height:19px">-10.77</td><td style="height:19px">-1.20</td><td style="height:19px"></td><td style="height:19px"></td><td style="height:19px"></td><td style="height:19px"></td></tr><tr class="cy" style="height:19px"><td class="red" style="height:19px">29.95</td><td style="height:19px">-10.22</td><td style="height:19px">-1.17</td><td style="height:19px"></td><td style="height:19px"></td><td style="height:19px"></td><td style="height:19px"></td></tr><tr class="cy" style="height:19px"><td class="red" style="height:19px">28.45</td><td style="height:19px">-9.68</td><td style="height:19px">-1.15</td><td style="height:19px"></td><td style="height:19px"></td><td style="height:19px"></td><td style="height:19px"></td></tr><tr class="cy" style="height:19px"><td class="red" style="height:19px">27.00</td><td style="height:19px">-9.17</td><td style="height:19px">-1.12</td><td style="height:19px">26.96</td><td style="height:19px">0.00</td><td style="height:19px"></td><td style="height:19px">+8</td></tr><tr class="cy" style="height:19px"><td class="red" style="height:19px">25.70</td><td style="height:19px">-8.70</td><td style="height:19px">-1.09</td><td style="height:19px"></td><td style="height:19px"></td><td style="height:19px"></td><td style="height:19px"></td></tr><tr class="wh" style="height:19px"><td class="grn" style="height:19px">24.45</td><td style="height:19px">-8.25</td><td style="height:19px">-1.06</td><td style="height:19px"></td><td style="height:19px"></td><td style="height:19px"></td><td style="height:19px"></td></tr><tr class="wh" style="height:19px"><td class="grn" style="height:19px">23.30</td><td style="height:19px">-7.83</td><td style="height:19px">-1.04</td><td style="height:19px"></td><td style="height:19px"></td><td style="height:19px"></td><td style="height:19px"></td></tr><tr class="wh" style="height:19px"><td class="red" style="height:19px">22.10</td><td style="height:19px">-7.42</td><td style="height:19px">-1.01</td><td style="height:19px"></td><td style="height:19px"></td><td style="height:19px"></td><td style="height:19px"></td></tr><tr class="wh" style="height:19px"><td class="grn" style="height:19px">21.15</td><td style="height:19px">-7.07</td><td style="height:19px">-0.99</td><td style="height:19px"></td><td style="height:19px"></td><td style="height:19px"></td><td style="height:19px"></td></tr><tr class="wh" style="height:19px"><td style="height:19px">20.15</td><td style="height:19px">-6.71</td><td style="height:19px">-0.96</td><td style="height:19px"></td><td style="height:19px"></td><td style="height:19px"></td><td style="height:19px"></td></tr></table>
<table style="left:541px;top:388px;width:458px;"><colgroup><col style="width:62px"><col style="width:62px"><col style="width:62px"><col style="width:62px"><col style="width:62px"><col style="width:62px"><col style="width:68px"><col style="width:17px"></colgroup><tr class="h" style="height:21px"><td style="height:21px">Mid</td><td style="height:21px">Delta</td><td style="height:21px">Theta</td><td style="height:21px">OrigPrice</td><td style="height:21px">IVChg</td><td style="height:21px">Model</td><td style="height:21px">Pos</td><td style="height:21px"></td></tr><tr class="bl" style="height:19px"><td class="red" style="height:19px">77.30</td><td style="height:19px">-26.61</td><td style="height:19px">-1.57</td><td style="height:19px"></td><td style="height:19px"></td><td style="height:19px"></td><td style="height:19px"></td><td style="height:19px;background:#cfd5e5;border-color:#cfd5e5;border-right-color:#a4adc3"></td></tr><tr class="bl" style="height:19px"><td class="grn" style="height:19px">73.05</td><td style="height:19px">-25.15</td><td style="height:19px">-1.57</td><td style="height:19px"></td><td style="height:19px"></td><td style="height:19px"></td><td style="height:19px"></td><td style="height:19px;background:#cfd5e5;border-color:#cfd5e5;border-right-color:#a4adc3"></td></tr><tr class="bl" style="height:19px"><td class="grn" style="height:19px">68.95</td><td style="height:19px">-23.75</td><td style="height:19px">-1.55</td><td style="height:19px"></td><td style="height:19px"></td><td style="height:19px"></td><td style="height:19px"></td><td style="height:19px;background:#cfd5e5;border-color:#cfd5e5;border-right-color:#a4adc3"></td></tr><tr class="bl" style="height:19px"><td class="grn" style="height:19px">65.15</td><td style="height:19px">-22.44</td><td style="height:19px">-1.54</td><td style="height:19px"></td><td style="height:19px"></td><td style="height:19px"></td><td style="height:19px"></td><td style="height:19px;background:#cfd5e5;border-color:#cfd5e5;border-right-color:#a4adc3"></td></tr><tr class="bl" style="height:19px"><td class="red" style="height:19px">61.50</td><td style="height:19px">-21.20</td><td style="height:19px">-1.52</td><td style="height:19px"></td><td style="height:19px"></td><td style="height:19px"></td><td style="height:19px"></td><td style="height:19px;background:#cfd5e5;border-color:#cfd5e5;border-right-color:#a4adc3"></td></tr><tr class="bl" style="height:19px"><td class="grn" style="height:19px">58.20</td><td style="height:19px">-20.04</td><td style="height:19px">-1.50</td><td style="height:19px"></td><td style="height:19px"></td><td style="height:19px"></td><td style="height:19px"></td><td style="height:19px;background:#cfd5e5;border-color:#cfd5e5;border-right-color:#a4adc3"></td></tr><tr class="cy" style="height:19px"><td class="grn" style="height:19px">55.05</td><td style="height:19px">-18.95</td><td style="height:19px">-1.48</td><td style="height:19px"></td><td style="height:19px"></td><td style="height:19px"></td><td style="height:19px"></td><td style="height:19px;background:#cfd5e5;border-color:#cfd5e5;border-right-color:#a4adc3"></td></tr><tr class="cy" style="height:19px"><td class="grn" style="height:19px">52.10</td><td style="height:19px">-17.91</td><td style="height:19px">-1.46</td><td style="height:19px"></td><td style="height:19px"></td><td style="height:19px"></td><td style="height:19px"></td><td style="height:19px;background:#cfd5e5;border-color:#cfd5e5;border-right-color:#a4adc3"></td></tr><tr class="cy" style="height:19px"><td class="grn" style="height:19px">49.35</td><td style="height:19px">-16.94</td><td style="height:19px">-1.44</td><td style="height:19px"></td><td style="height:19px"></td><td style="height:19px"></td><td style="height:19px"></td><td style="height:19px;background:#cfd5e5;border-color:#cfd5e5;border-right-color:#a4adc3"></td></tr><tr class="cy" style="height:19px"><td class="grn" style="height:19px">46.70</td><td style="height:19px">-16.02</td><td style="height:19px">-1.41</td><td style="height:19px"></td><td style="height:19px"></td><td style="height:19px"></td><td style="height:19px"></td><td style="height:19px;background:#cfd5e5;border-color:#cfd5e5;border-right-color:#a4adc3"></td></tr><tr class="cy" style="height:19px"><td class="grn" style="height:19px">44.30</td><td style="height:19px">-15.16</td><td style="height:19px">-1.39</td><td style="height:19px"></td><td style="height:19px"></td><td style="height:19px"></td><td style="height:19px"></td><td style="height:19px;background:#cfd5e5;border-color:#cfd5e5;border-right-color:#a4adc3"></td></tr><tr class="cy" style="height:19px"><td class="grn" style="height:19px">42.00</td><td style="height:19px">-14.35</td><td style="height:19px">-1.36</td><td style="height:19px"></td><td style="height:19px"></td><td style="height:19px"></td><td style="height:19px"></td><td style="height:19px;background:#cfd5e5;border-color:#cfd5e5;border-right-color:#a4adc3"></td></tr><tr class="cy" style="height:19px"><td class="grn" style="height:19px">39.85</td><td style="height:19px">-13.59</td><td style="height:19px">-1.33</td><td style="height:19px"></td><td style="height:19px"></td><td style="height:19px"></td><td style="height:19px"></td><td style="height:19px;background:#cfd5e5;border-color:#cfd5e5;border-right-color:#a4adc3"></td></tr><tr class="cy" style="height:19px"><td class="red" style="height:19px">37.80</td><td style="height:19px">-12.87</td><td style="height:19px">-1.31</td><td style="height:19px"></td><td style="height:19px"></td><td style="height:19px"></td><td style="height:19px"></td><td style="height:19px;background:#cfd5e5;border-color:#cfd5e5;border-right-color:#a4adc3"></td></tr><tr class="cy" style="height:19px"><td class="grn" style="height:19px">35.90</td><td style="height:19px">-12.19</td><td style="height:19px">-1.28</td><td style="height:19px"></td><td style="height:19px"></td><td style="height:19px"></td><td style="height:19px"></td><td style="height:19px;background:#cfd5e5;border-color:#cfd5e5;border-right-color:#a4adc3"></td></tr><tr class="cy" style="height:19px"><td class="red" style="height:19px">34.05</td><td style="height:19px">-11.54</td><td style="height:19px">-1.25</td><td style="height:19px"></td><td style="height:19px"></td><td style="height:19px"></td><td style="height:19px"></td><td style="height:19px;background:#cfd5e5;border-color:#cfd5e5;border-right-color:#a4adc3"></td></tr><tr class="cy" style="height:19px"><td class="grn" style="height:19px">32.35</td><td style="height:19px">-10.94</td><td style="height:19px">-1.22</td><td style="height:19px"></td><td style="height:19px"></td><td style="height:19px"></td><td style="height:19px"></td><td style="height:19px;background:#cfd5e5;border-color:#cfd5e5;border-right-color:#a4adc3"></td></tr><tr class="cy" style="height:19px"><td class="grn" style="height:19px">30.70</td><td style="height:19px">-10.36</td><td style="height:19px">-1.19</td><td style="height:19px"></td><td style="height:19px"></td><td style="height:19px"></td><td style="height:19px"></td><td style="height:19px;background:#cfd5e5;border-color:#cfd5e5;border-right-color:#a4adc3"></td></tr><tr class="cy" style="height:19px"><td class="grn" style="height:19px">29.15</td><td style="height:19px">-9.82</td><td style="height:19px">-1.17</td><td style="height:19px"></td><td style="height:19px"></td><td style="height:19px"></td><td style="height:19px"></td><td style="height:19px;background:#cfd5e5;border-color:#cfd5e5;border-right-color:#a4adc3"></td></tr><tr class="cy" style="height:19px"><td class="grn" style="height:19px">27.75</td><td style="height:19px">-9.32</td><td style="height:19px">-1.14</td><td style="height:19px"></td><td style="height:19px"></td><td style="height:19px"></td><td style="height:19px"></td><td style="height:19px;background:#cfd5e5;border-color:#cfd5e5;border-right-color:#a4adc3"></td></tr><tr class="cy" style="height:19px"><td class="grn" style="height:19px">26.35</td><td style="height:19px">-8.83</td><td style="height:19px">-1.11</td><td style="height:19px"></td><td style="height:19px"></td><td style="height:19px"></td><td style="height:19px"></td><td style="height:19px;background:#cfd5e5;border-color:#cfd5e5;border-right-color:#a4adc3"></td></tr><tr class="wh" style="height:19px"><td class="grn" style="height:19px">25.10</td><td style="height:19px">-8.38</td><td style="height:19px">-1.08</td><td style="height:19px"></td><td style="height:19px"></td><td style="height:19px"></td><td style="height:19px"></td><td style="height:19px;background:#cfd5e5;border-color:#cfd5e5;border-right-color:#a4adc3"></td></tr><tr class="wh" style="height:19px"><td class="grn" style="height:19px">23.90</td><td style="height:19px">-7.96</td><td style="height:19px">-1.06</td><td style="height:19px"></td><td style="height:19px"></td><td style="height:19px"></td><td style="height:19px"></td><td style="height:19px;background:#cfd5e5;border-color:#cfd5e5;border-right-color:#a4adc3"></td></tr><tr class="wh" style="height:19px"><td class="grn" style="height:19px">22.75</td><td style="height:19px">-7.55</td><td style="height:19px">-1.03</td><td style="height:19px"></td><td style="height:19px"></td><td style="height:19px"></td><td style="height:19px"></td><td style="height:19px;background:#cfd5e5;border-color:#cfd5e5;border-right-color:#a4adc3"></td></tr><tr class="wh" style="height:19px"><td class="grn" style="height:19px">21.65</td><td style="height:19px">-7.17</td><td style="height:19px">-1.00</td><td style="height:19px"></td><td style="height:19px"></td><td style="height:19px"></td><td style="height:19px"></td><td style="height:19px;background:#cfd5e5;border-color:#cfd5e5;border-right-color:#a4adc3"></td></tr><tr class="wh" style="height:19px"><td class="grn" style="height:19px">20.65</td><td style="height:19px">-6.81</td><td style="height:19px">-0.98</td><td style="height:19px"></td><td style="height:19px"></td><td style="height:19px"></td><td style="height:19px"></td><td style="height:19px;background:#cfd5e5;border-color:#cfd5e5;border-right-color:#a4adc3"></td></tr></table>
<div class="box" style="left:17px;top:249px;width:60px;height:126px"></div>
<div class="box" style="left:80px;top:249px;width:458px;height:126px"></div>
<div class="box" style="left:541px;top:249px;width:458px;height:126px"></div>
<div class="box" style="left:17px;top:388px;width:60px;height:516px"></div>
<div class="box" style="left:80px;top:388px;width:458px;height:516px"></div>
<div class="box" style="left:541px;top:388px;width:458px;height:516px"></div>
<div class="box" style="left:17px;top:196px;width:642px;height:41px"></div>
<div class="box" style="left:662px;top:196px;width:336px;height:41px"></div>
<svg class="a" style="left:985px;top:414px" width="10" height="6"><path d="M0 5.500h9L4.500 .5z" fill="#68728a"/></svg>
<div class="a" style="left:985px;top:597px;width:9px;height:53px;background:#9aa5ba"></div>
<svg class="a" style="left:985px;top:893px" width="10" height="6"><path d="M0 .5h9L4.500 5.500z" fill="#68728a"/></svg>
<svg class="a" style="left:1004px;top:575px" width="5" height="19" fill="#98a1b7"><rect x="0" y="0" width="1" height="1"/><rect x="0" y="2" width="1" height="1"/><rect x="0" y="4" width="1" height="1"/><rect x="0" y="6" width="1" height="1"/><rect x="0" y="8" width="1" height="1"/><rect x="0" y="10" width="1" height="1"/><rect x="0" y="12" width="1" height="1"/><rect x="0" y="14" width="1" height="1"/><rect x="0" y="16" width="1" height="1"/><rect x="2" y="1" width="1" height="1"/><rect x="2" y="3" width="1" height="1"/><rect x="2" y="5" width="1" height="1"/><rect x="2" y="7" width="1" height="1"/><rect x="2" y="9" width="1" height="1"/><rect x="2" y="11" width="1" height="1"/><rect x="2" y="13" width="1" height="1"/><rect x="2" y="15" width="1" height="1"/><rect x="2" y="17" width="1" height="1"/><rect x="4" y="0" width="1" height="1"/><rect x="4" y="2" width="1" height="1"/><rect x="4" y="4" width="1" height="1"/><rect x="4" y="6" width="1" height="1"/><rect x="4" y="8" width="1" height="1"/><rect x="4" y="10" width="1" height="1"/><rect x="4" y="12" width="1" height="1"/><rect x="4" y="14" width="1" height="1"/><rect x="4" y="16" width="1" height="1"/></svg>
<div class="a" style="left:12px;top:918px;width:994px;height:24px;background:#d1d7e6"></div>
<div class="t" style="left:19px;top:922px">Trade Analysis</div>
<div class="combo" style="left:105px;top:919px;width:150px">Combined</div>
<div class="combo" style="left:263px;top:919px;width:80px">Auto</div>
<div class="a" style="left:856px;top:922px;width:13px;height:13px;background:#fff;border:1px solid #a9b1c5"></div>
<div class="t" style="left:873px;top:921px;letter-spacing:-0.15px">Ignore Today's Trades</div>
<table style="left:13px;top:942px;width:987px;"><colgroup><col style="width:75px"><col style="width:75px"><col style="width:75px"><col style="width:75px"><col style="width:75px"><col style="width:75px"><col style="width:75px"><col style="width:75px"><col style="width:75px"><col style="width:75px"><col style="width:75px"><col style="width:75px"><col style="width:86px"></colgroup><tr class="h" style="height:21px"><td style="height:21px;letter-spacing:-0.9px">Analysis</td><td style="height:21px">Margin</td><td style="height:21px">Cost</td><td style="height:21px">Curr Cost</td><td style="height:21px">Commission</td><td style="height:21px">PnL</td><td style="height:21px">PnL%</td><td style="height:21px">Delta</td><td style="height:21px">Gamma</td><td style="height:21px">Theta</td><td style="height:21px">Vega</td><td style="height:21px">T/D</td><td style="height:21px">Plot</td></tr><tr class="wh" style="height:19px"><td style="height:19px;text-align:left;padding:0;height:19px;color:#1f66d6;letter-spacing:-0.8px"><span style="display:inline-block;width:9px;height:9px;border:1px solid #555;position:relative;margin:0 6px 0 2px;vertical-align:1px"><i style="position:absolute;left:1px;top:3px;width:5px;height:1px;background:#555"></i><i style="position:absolute;left:3px;top:1px;width:1px;height:5px;background:#555"></i></span>Position</td><td style="height:19px">99,521.98</td><td style="height:19px">5,478.02</td><td style="height:19px">-5,480.00</td><td style="height:19px">12.00</td><td class="red" style="height:19px">-1.98</td><td class="red" style="height:19px">0.00%</td><td style="height:19px">19.85</td><td style="height:19px">-0.06</td><td style="height:19px">126.74</td><td style="height:19px">-650.95</td><td style="height:19px">6.4</td><td style="height:19px;text-align:center;padding:0;height:19px"><svg width="13" height="13" style="vertical-align:-2px"><rect x=".5" y=".5" width="12" height="12" fill="#fff" stroke="#9aa3ba"/><path d="M3 6.500l2.500 3L10 3" fill="none" stroke="#6a6f7c" stroke-width="1.300"/></svg></td></tr><tr class="wh" style="height:19px"><td style="height:19px;text-align:left;padding:0;height:19px;color:#2a8a1f;letter-spacing:-0.7px"><span style="display:inline-block;width:9px;height:9px;border:1px solid #b5b8c4;position:relative;margin:0 6px 0 2px;vertical-align:1px"><i style="position:absolute;left:1px;top:3px;width:5px;height:1px;background:#b5b8c4"></i><i style="position:absolute;left:3px;top:1px;width:1px;height:5px;background:#b5b8c4"></i></span>Model</td><td style="height:19px"></td><td style="height:19px"></td><td style="height:19px"></td><td style="height:19px"></td><td style="height:19px"></td><td style="height:19px"></td><td style="height:19px">0.00</td><td style="height:19px">0.00</td><td style="height:19px">0.00</td><td style="height:19px">0.00</td><td style="height:19px">0</td><td style="height:19px;text-align:center;padding:0;height:19px"><svg width="13" height="13" style="vertical-align:-2px"><rect x=".5" y=".5" width="12" height="12" fill="#fff" stroke="#9aa3ba"/><path d="M3 6.500l2.500 3L10 3" fill="none" stroke="#6a6f7c" stroke-width="1.300"/></svg></td></tr></table>
<div class="a" style="left:1012px;top:165px;width:895px;height:837px;border:1px solid #a9b2c8"></div>
<div class="a" style="left:1907px;top:163px;width:1px;height:841px;background:#b9c0d4"></div>
<div class="a" style="left:1013px;top:166px;width:75px;height:27px;background:#d9deeb"></div>
<div class="t c" style="left:1013px;width:75px;top:170px">Risk Chart</div>
<div class="a" style="left:1088px;top:166px;width:81px;height:26px;background:#d0d6e5;border:1px solid #a9b2c8"></div>
<div class="t c" style="left:1088px;width:80px;top:170px">Price Chart</div>
<div class="a" style="left:1169px;top:166px;width:125px;height:26px;background:#d0d6e5;border:1px solid #a9b2c8"></div>
<div class="t c" style="left:1169px;width:124px;top:170px">Movement Analysis</div>
<div class="a" style="left:1294px;top:166px;width:67px;height:26px;background:#d0d6e5;border:1px solid #a9b2c8"></div>
<div class="t c" style="left:1294px;width:66px;top:170px">Volatility</div>
<div class="a" style="left:1361px;top:166px;width:161px;height:26px;background:#d0d6e5;border:1px solid #a9b2c8"></div>
<div class="t c" style="left:1361px;width:160px;top:170px">Statistics &amp; Fundamentals</div>
<div class="a" style="left:1088px;top:191px;width:817px;height:1px;background:#a9b2c8"></div>
<div class="t" style="left:1019px;top:197px">Vol Adjust</div>
<div class="a" style="left:1080px;top:194px;width:53px;height:20px;background:#fff;border:1px solid #a9b1c5"></div>
<div class="t r n" style="left:1082px;width:30px;top:196px">0</div>
<svg class="a" style="left:1120px;top:197px" width="9" height="15"><path d="M0 5h8L4 .5z M0 10h8L4 14.500z" fill="#68728a"/></svg>
<div class="t" style="left:1660px;top:197px">Projection</div>
<div class="a" style="left:1720px;top:194px;width:180px;height:20px;background:#fff;border:1px solid #a9b1c5"></div>
<div class="t n" style="left:1723px;top:196px">10/10/2025</div>
<svg class="a" style="left:1797px;top:202px" width="8" height="5"><path d="M0 0h8L4 4.500z" fill="#68728a"/></svg>
<div class="t n" style="left:1816px;top:196px">T+0</div>
<div class="t n" style="left:1845px;top:196px">1Ln</div>
<svg class="a" style="left:1872px;top:200px" width="24" height="9"><path d="M5.500 0v9L.5 4.500z M17.500 0v9l5-4.500z" fill="#111"/></svg>
<div class="a" style="left:1013px;top:217px;width:892px;height:759px;background:#fff"></div>
<svg class="a" style="left:0;top:0;letter-spacing:0" width="1910" height="1006" viewBox="0 0 1910 1006">
<rect x="1464.4" y="235.5" width="63.3" height="531.0" fill="#8fc9dc"/>
<rect x="1480.0" y="235.5" width="32.0" height="531.0" fill="#4f81bd"/>
<path d="M1064.0 235.4H1851.5M1064.0 255.8H1851.5M1064.0 276.3H1851.5M1064.0 296.7H1851.5M1064.0 317.2H1851.5M1064.0 337.6H1851.5M1064.0 358.0H1851.5M1064.0 378.5H1851.5M1064.0 398.9H1851.5M1064.0 419.4H1851.5M1064.0 439.8H1851.5M1064.0 460.2H1851.5M1064.0 480.7H1851.5M1064.0 501.1H1851.5M1064.0 521.6H1851.5M1064.0 542.0H1851.5M1064.0 562.4H1851.5M1064.0 582.9H1851.5M1064.0 603.3H1851.5M1064.0 623.8H1851.5M1064.0 644.2H1851.5M1064.0 664.6H1851.5M1064.0 685.1H1851.5M1064.0 705.5H1851.5M1064.0 726.0H1851.5M1064.0 746.4H1851.5M1064.0 766.8H1851.5M1098.3 231.0V766.5M1168.3 231.0V766.5M1238.3 231.0V766.5M1308.3 231.0V766.5M1378.3 231.0V766.5M1448.3 231.0V766.5M1518.3 231.0V766.5M1588.3 231.0V766.5M1658.3 231.0V766.5M1728.3 231.0V766.5M1798.3 231.0V766.5M1068.5 235.5V766.5M1851.5 235.5V766.5" stroke="#d6d6d6" stroke-width="1.100" fill="none"/>
<g font-family="Liberation Sans" font-size="10.800" fill="#222">
<text x="1098.3" y="229" text-anchor="middle">-16.9%</text>
<text x="1168.3" y="229" text-anchor="middle">-13.9%</text>
<text x="1238.3" y="229" text-anchor="middle">-10.9%</text>
<text x="1308.3" y="229" text-anchor="middle">-7.9%</text>
<text x="1378.3" y="229" text-anchor="middle">-5.0%</text>
<text x="1434" y="229">-2</text>
<text x="1518.3" y="229" text-anchor="middle">1.0%</text>
<text x="1588.3" y="229" text-anchor="middle">3.9%</text>
<text x="1658.3" y="229" text-anchor="middle">6.9%</text>
<text x="1728.3" y="229" text-anchor="middle">9.9%</text>
<text x="1798.3" y="229" text-anchor="middle">12.8%</text>
<text x="1098.9" y="783" text-anchor="middle">5600</text>
<text x="1168.9" y="783" text-anchor="middle">5800</text>
<text x="1238.9" y="783" text-anchor="middle">6000</text>
<text x="1308.9" y="783" text-anchor="middle">6200</text>
<text x="1378.9" y="783" text-anchor="middle">6400</text>
<text x="1518.9" y="783" text-anchor="middle">6800</text>
<text x="1588.9" y="783" text-anchor="middle">7000</text>
<text x="1658.9" y="783" text-anchor="middle">7200</text>
<text x="1728.9" y="783" text-anchor="middle">7400</text>
<text x="1798.9" y="783" text-anchor="middle">7600</text>
<text x="1061.500" y="239.9" text-anchor="end">25%</text>
<text x="1061.500" y="260.3" text-anchor="end">20%</text>
<text x="1061.500" y="280.8" text-anchor="end">15%</text>
<text x="1061.500" y="301.2" text-anchor="end">10%</text>
<text x="1061.500" y="321.7" text-anchor="end">5%</text>
<text x="1061.500" y="362.5" text-anchor="end">-5%</text>
<text x="1061.500" y="383.0" text-anchor="end">-10%</text>
<text x="1061.500" y="403.4" text-anchor="end">-15%</text>
<text x="1061.500" y="423.9" text-anchor="end">-20%</text>
<text x="1061.500" y="444.3" text-anchor="end">-25%</text>
<text x="1061.500" y="464.7" text-anchor="end">-30%</text>
<text x="1061.500" y="485.2" text-anchor="end">-35%</text>
<text x="1061.500" y="505.6" text-anchor="end">-40%</text>
<text x="1061.500" y="526.1" text-anchor="end">-45%</text>
<text x="1061.500" y="546.5" text-anchor="end">-50%</text>
<text x="1061.500" y="566.9" text-anchor="end">-55%</text>
<text x="1061.500" y="587.4" text-anchor="end">-60%</text>
<text x="1061.500" y="607.8" text-anchor="end">-65%</text>
<text x="1061.500" y="628.3" text-anchor="end">-70%</text>
<text x="1061.500" y="648.7" text-anchor="end">-75%</text>
<text x="1061.500" y="669.1" text-anchor="end">-80%</text>
<text x="1061.500" y="689.6" text-anchor="end">-85%</text>
<text x="1061.500" y="710.0" text-anchor="end">-90%</text>
<text x="1061.500" y="730.5" text-anchor="end">-95%</text>
<text x="1061.500" y="750.9" text-anchor="end">-100%</text>
<text x="1061.500" y="770.8" text-anchor="end">-106%</text>
<text x="1858" y="239.9">25,000</text>
<text x="1858" y="260.3">20,000</text>
<text x="1858" y="280.8">15,000</text>
<text x="1858" y="301.2">10,000</text>
<text x="1858" y="321.7">5,000</text>
<text x="1858" y="362.5">-5,000</text>
<text x="1858" y="383.0">-10,000</text>
<text x="1858" y="403.4">-15,000</text>
<text x="1858" y="423.9">-20,000</text>
<text x="1858" y="444.3">-25,000</text>
<text x="1858" y="464.7">-30,000</text>
<text x="1858" y="485.2">-35,000</text>
<text x="1858" y="505.6">-40,000</text>
<text x="1858" y="526.1">-45,000</text>
<text x="1858" y="546.5">-50,000</text>
<text x="1858" y="566.9">-55,000</text>
<text x="1858" y="587.4">-60,000</text>
<text x="1858" y="607.8">-65,000</text>
<text x="1858" y="628.3">-70,000</text>
<text x="1858" y="648.7">-75,000</text>
<text x="1858" y="669.1">-80,000</text>
<text x="1858" y="689.6">-85,000</text>
<text x="1858" y="710.0">-90,000</text>
<text x="1858" y="730.5">-95,000</text>
<text x="1858" y="750.9">-100,000</text>
<text x="1858" y="771.3">-105,000</text>
</g>
<rect x="1019" y="330.500" width="45.500" height="14" fill="#d40000"/><text x="1061.500" y="342" font-family="Liberation Sans" font-size="10.800" fill="#fff" text-anchor="end">0%</text>
<rect x="1856" y="330.500" width="47" height="14" fill="#d40000"/><text x="1859" y="342" font-family="Liberation Sans" font-size="10.800" fill="#fff">-2</text>
<rect x="1443.500" y="217.500" width="33" height="13" fill="#e6eef8" stroke="#44546a"/><text x="1460" y="229" font-family="Liberation Sans" font-size="10.800" fill="#222" text-anchor="middle">-1.5%</text>
<text transform="translate(1475.9 278) rotate(-90)" font-family="Liberation Sans" font-size="10.800" fill="#5b8fd0">6646.06</text>
<text transform="translate(1492.0 278) rotate(-90)" font-family="Liberation Sans" font-size="10.800" fill="#9fc4e8">6690.59</text>
<text transform="translate(1510.4 278) rotate(-90)" font-family="Liberation Sans" font-size="10.800" fill="#9fc4e8">6779.63</text>
<text transform="translate(1526.3 278) rotate(-90)" font-family="Liberation Sans" font-size="10.800" fill="#5b8fd0">6824.16</text>
<path d="M1068.5 337.500H1851.5" stroke="#000" stroke-width="1.300"/>
<path d="M1461.500 331.500L1504.800 323.600V333.300L1461.500 341.500Z" fill="#f0926a" fill-opacity=".62"/>
<path d="M1068.5 623C1073.5 618.5 1081.5 612.1 1098.2 595.8C1114.9 579.5 1145.2 548.0 1168.5 525.2C1191.8 502.4 1223.6 472.5 1238.2 458.8C1252.8 445.1 1244.6 452.5 1256.3 443.3C1268.0 434.1 1292.6 414.8 1308.3 403.8C1324.0 392.9 1338.8 384.2 1350.4 377.6" stroke="#f03030" stroke-width="1.300" fill="none"/>
<path d="M1350.4 377.6C1362.0 371.0 1368.3 368.6 1378.1 364.2C1387.9 359.8 1395.8 356.0 1409.4 351.5C1423.0 347.0 1441.4 341.5 1459.5 337.4C1477.6 333.3 1496.7 329.7 1518.2 326.8C1539.7 323.9 1565.0 321.9 1588.4 320.2C1611.8 318.5 1635.2 317.5 1658.5 316.7C1681.8 315.9 1696.3 315.8 1728.4 315.5C1760.5 315.2 1830.6 314.9 1851 314.8" stroke="#6a9af0" stroke-width="1.200" fill="none"/>
<path d="M1068.7 743.5 L1212.0 743.5 L1264.5 253.9 L1352.0 253.9 L1378.3 315.3 L1851.8 315.3" stroke="#3c3cc6" stroke-width="2.200" fill="none" stroke-linejoin="round"/>
<path d="M1256.3 235.5V766.5" stroke="#8a1a9a" stroke-width="1.300" stroke-dasharray="4 4"/>
<text transform="translate(1255.1 764.500) rotate(-90)" font-family="Liberation Sans" font-size="10.800" fill="#8a1a9a">6051.39</text>
<text x="1538" y="757.500" font-family="Liberation Sans" font-size="10.800" fill="#9a30a8">96.0%</text>
<circle cx="1460.300" cy="337.500" r="4.200" fill="#f00" stroke="#000" stroke-width="1"/>
<rect x="1073.500" y="240.500" width="169.500" height="84" rx="6" fill="#e9eff9" fill-opacity=".88" stroke="#5d6b82"/>
<rect x="1081" y="248" width="4" height="13.500" fill="#f83a3a"/>
<text x="1085.500" y="258.7" font-family="Liberation Sans" font-size="10.800" fill="#555" letter-spacing=".3">-12.00 Realized PnL</text>
<rect x="1081" y="262" width="4" height="13.500" fill="#8aaaf0"/>
<text x="1085.500" y="272.7" font-family="Liberation Sans" font-size="10.800" fill="#555" letter-spacing=".3">+2</text>
<text x="1101" y="272.7" font-family="Liberation Sans" font-size="10.800" fill="#5050f0" letter-spacing=".45">21nov. 6400 Put Δ</text>
<text x="1235" y="272.7" font-family="Liberation Sans" font-size="10.800" fill="#5050f0" letter-spacing=".45" text-anchor="end">-26.45</text>
<rect x="1081" y="276" width="4" height="13.500" fill="#8aaaf0"/>
<text x="1085.500" y="286.7" font-family="Liberation Sans" font-size="10.800" fill="#555" letter-spacing=".3">+8</text>
<text x="1101" y="286.7" font-family="Liberation Sans" font-size="10.800" fill="#5050f0" letter-spacing=".45">21nov. 5925 Put Δ</text>
<text x="1235" y="286.7" font-family="Liberation Sans" font-size="10.800" fill="#5050f0" letter-spacing=".45" text-anchor="end">-9.17</text>
<rect x="1081" y="290" width="4" height="13.500" fill="#8aaaf0"/>
<text x="1085.500" y="300.7" font-family="Liberation Sans" font-size="10.800" fill="#555" letter-spacing=".3">-2</text>
<text x="1099" y="300.7" font-family="Liberation Sans" font-size="10.800" fill="#ff4848" letter-spacing=".45">21nov. 6325 Put Δ</text>
<text x="1233" y="300.7" font-family="Liberation Sans" font-size="10.800" fill="#ff4848" letter-spacing=".45" text-anchor="end">-22.28</text>
<rect x="1081" y="304" width="4" height="13.500" fill="#8aaaf0"/>
<text x="1085.500" y="314.7" font-family="Liberation Sans" font-size="10.800" fill="#555" letter-spacing=".3">-8</text>
<text x="1099" y="314.7" font-family="Liberation Sans" font-size="10.800" fill="#ff4848" letter-spacing=".45">21nov. 6075 Put Δ</text>
<text x="1233" y="314.7" font-family="Liberation Sans" font-size="10.800" fill="#ff4848" letter-spacing=".45" text-anchor="end">-12.69</text>
<rect x="1712.500" y="240.500" width="136" height="44.500" rx="6" fill="#e9eff9" fill-opacity=".88" stroke="#5d6b82"/>
<text x="1724" y="257" font-family="Liberation Sans" font-size="10.800" font-weight="bold" fill="#555" letter-spacing=".35">Comments</text>
<text x="1724" y="276" font-family="Liberation Sans" font-size="10.800" fill="#666" letter-spacing=".5">Trade Occurred Today</text>
<rect x="1073.500" y="719.500" width="93" height="42" rx="6" fill="#e9eff9" fill-opacity=".85" stroke="#5d6b82"/>
<text x="1081" y="737.500" font-family="Liberation Sans" font-size="10.800" fill="#6a6ad8" letter-spacing=".3">21/11/2025 (0)</text>
<text x="1081" y="751.700" font-family="Liberation Sans" font-size="10.800" fill="#8fb2ee" letter-spacing=".27">10/10/2025 (42)</text>
<text x="1150" y="757.500" font-family="Liberation Sans" font-size="10.800" fill="#8a1a9a">4.0%</text>
<rect x="1017.500" y="787.500" width="884" height="184" rx="6" fill="#e8eef7" stroke="#5d6b82"/>
<text x="1044" y="820" font-family="Liberation Sans" font-size="10.800" fill="#666" text-anchor="middle" letter-spacing=".3">PnL</text>
<text x="1880" y="820" font-family="Liberation Sans" font-size="10.800" fill="#666" text-anchor="middle" letter-spacing=".3">PnL</text>
<path d="M1069 815.5H1852" stroke="#555a60" stroke-width="1"/>
<rect x="1069.0" y="815.5" width="65.5" height="10.0" fill="#f4777a" stroke="#555a60" stroke-width="1"/>
<text x="1098.9" y="803.700" font-family="Liberation Sans" font-size="10.800" fill="#f25a5a" text-anchor="middle">-64%</text>
<text x="1098.9" y="815" font-family="Liberation Sans" font-size="10.800" fill="#f25a5a" text-anchor="middle">-63262</text>
<rect x="1134.5" y="815.5" width="70.0" height="7.3" fill="#f4777a" stroke="#555a60" stroke-width="1"/>
<text x="1168.9" y="803.700" font-family="Liberation Sans" font-size="10.800" fill="#f25a5a" text-anchor="middle">-46%</text>
<text x="1168.9" y="815" font-family="Liberation Sans" font-size="10.800" fill="#f25a5a" text-anchor="middle">-46109</text>
<rect x="1204.5" y="815.5" width="70.0" height="4.7" fill="#f4777a" stroke="#555a60" stroke-width="1"/>
<text x="1238.9" y="803.700" font-family="Liberation Sans" font-size="10.800" fill="#f25a5a" text-anchor="middle">-30%</text>
<text x="1238.9" y="815" font-family="Liberation Sans" font-size="10.800" fill="#f25a5a" text-anchor="middle">-29572</text>
<rect x="1274.5" y="815.5" width="70.0" height="2.5" fill="#f4777a" stroke="#555a60" stroke-width="1"/>
<text x="1308.9" y="803.700" font-family="Liberation Sans" font-size="10.800" fill="#f25a5a" text-anchor="middle">-16%</text>
<text x="1308.9" y="815" font-family="Liberation Sans" font-size="10.800" fill="#f25a5a" text-anchor="middle">-16067</text>
<rect x="1344.5" y="815.5" width="70.0" height="1.0" fill="#f4777a" stroke="#555a60" stroke-width="1"/>
<text x="1378.9" y="803.700" font-family="Liberation Sans" font-size="10.800" fill="#f25a5a" text-anchor="middle">-7%</text>
<text x="1378.9" y="815" font-family="Liberation Sans" font-size="10.800" fill="#f25a5a" text-anchor="middle">-6565</text>
<text x="1448.9" y="803.700" font-family="Liberation Sans" font-size="10.800" fill="#f25a5a" text-anchor="middle" opacity=".5">-1%</text>
<text x="1448.9" y="815" font-family="Liberation Sans" font-size="10.800" fill="#f25a5a" text-anchor="middle" opacity=".5">-689</text>
<text x="1518.9" y="825.500" font-family="Liberation Sans" font-size="10.800" fill="#6868f2" text-anchor="middle">2570</text>
<text x="1518.9" y="835.500" font-family="Liberation Sans" font-size="10.800" fill="#6868f2" text-anchor="middle">3%</text>
<rect x="1554.5" y="814.8" width="70.0" height="0.7" fill="#5a7cff" stroke="#555a60" stroke-width="1"/>
<text x="1588.9" y="825.500" font-family="Liberation Sans" font-size="10.800" fill="#6868f2" text-anchor="middle">4216</text>
<text x="1588.9" y="835.500" font-family="Liberation Sans" font-size="10.800" fill="#6868f2" text-anchor="middle">4%</text>
<rect x="1624.5" y="814.7" width="70.0" height="0.8" fill="#5a7cff" stroke="#555a60" stroke-width="1"/>
<text x="1658.9" y="825.500" font-family="Liberation Sans" font-size="10.800" fill="#6868f2" text-anchor="middle">4980</text>
<text x="1658.9" y="835.500" font-family="Liberation Sans" font-size="10.800" fill="#6868f2" text-anchor="middle">5%</text>
<rect x="1694.5" y="814.7" width="70.0" height="0.8" fill="#5a7cff" stroke="#555a60" stroke-width="1"/>
<text x="1728.9" y="825.500" font-family="Liberation Sans" font-size="10.800" fill="#6868f2" text-anchor="middle">5304</text>
<text x="1728.9" y="835.500" font-family="Liberation Sans" font-size="10.800" fill="#6868f2" text-anchor="middle">5%</text>
<rect x="1764.5" y="814.6" width="70.0" height="0.9" fill="#5a7cff" stroke="#555a60" stroke-width="1"/>
<text x="1798.9" y="825.500" font-family="Liberation Sans" font-size="10.800" fill="#6868f2" text-anchor="middle">5427</text>
<text x="1798.9" y="835.500" font-family="Liberation Sans" font-size="10.800" fill="#6868f2" text-anchor="middle">5%</text>
<text x="1044" y="862" font-family="Liberation Sans" font-size="10.800" fill="#666" text-anchor="middle" letter-spacing=".3">Delta</text>
<text x="1880" y="862" font-family="Liberation Sans" font-size="10.800" fill="#666" text-anchor="middle" letter-spacing=".3">Delta</text>
<path d="M1069 857.5H1852" stroke="#555a60" stroke-width="1"/>
<rect x="1069.0" y="848.4" width="65.5" height="9.1" fill="#5a7cff" stroke="#555a60" stroke-width="1"/>
<text x="1098.9" y="868.1" font-family="Liberation Sans" font-size="10.800" fill="#6868f2" text-anchor="middle">82.27</text>
<rect x="1134.5" y="847.9" width="70.0" height="9.6" fill="#5a7cff" stroke="#555a60" stroke-width="1"/>
<text x="1168.9" y="868.1" font-family="Liberation Sans" font-size="10.800" fill="#6868f2" text-anchor="middle">86.69</text>
<rect x="1204.5" y="849.0" width="70.0" height="8.5" fill="#5a7cff" stroke="#555a60" stroke-width="1"/>
<text x="1238.9" y="868.1" font-family="Liberation Sans" font-size="10.800" fill="#6868f2" text-anchor="middle">76.58</text>
<rect x="1274.5" y="851.1" width="70.0" height="6.4" fill="#5a7cff" stroke="#555a60" stroke-width="1"/>
<text x="1308.9" y="868.1" font-family="Liberation Sans" font-size="10.800" fill="#6868f2" text-anchor="middle">57.67</text>
<rect x="1344.5" y="853.3" width="70.0" height="4.2" fill="#5a7cff" stroke="#555a60" stroke-width="1"/>
<text x="1378.9" y="868.1" font-family="Liberation Sans" font-size="10.800" fill="#6868f2" text-anchor="middle">37.74</text>
<rect x="1414.5" y="855.1" width="70.0" height="2.4" fill="#5a7cff" stroke="#555a60" stroke-width="1"/>
<text x="1448.9" y="868.1" font-family="Liberation Sans" font-size="10.800" fill="#6868f2" text-anchor="middle" opacity=".5">21.52</text>
<rect x="1484.5" y="856.2" width="70.0" height="1.3" fill="#5a7cff" stroke="#555a60" stroke-width="1"/>
<text x="1518.9" y="868.1" font-family="Liberation Sans" font-size="10.800" fill="#6868f2" text-anchor="middle">11.52</text>
<rect x="1554.5" y="856.9" width="70.0" height="0.6" fill="#5a7cff" stroke="#555a60" stroke-width="1"/>
<text x="1588.9" y="868.1" font-family="Liberation Sans" font-size="10.800" fill="#6868f2" text-anchor="middle">5.55</text>
<text x="1658.9" y="868.1" font-family="Liberation Sans" font-size="10.800" fill="#6868f2" text-anchor="middle">2.45</text>
<text x="1728.9" y="868.1" font-family="Liberation Sans" font-size="10.800" fill="#6868f2" text-anchor="middle">0.98</text>
<text x="1798.9" y="868.1" font-family="Liberation Sans" font-size="10.800" fill="#6868f2" text-anchor="middle">0.35</text>
<text x="1044" y="894" font-family="Liberation Sans" font-size="10.800" fill="#666" text-anchor="middle" letter-spacing=".3">Gamma</text>
<text x="1880" y="894" font-family="Liberation Sans" font-size="10.800" fill="#666" text-anchor="middle" letter-spacing=".3">Gamma</text>
<path d="M1069 889.5H1852" stroke="#555a60" stroke-width="1"/>
<rect x="1069.0" y="883.5" width="65.5" height="6.0" fill="#5a7cff" stroke="#555a60" stroke-width="1"/>
<text x="1098.9" y="900.1" font-family="Liberation Sans" font-size="10.800" fill="#6868f2" text-anchor="middle">0.06</text>
<rect x="1134.5" y="889.5" width="70.0" height="2.0" fill="#f4777a" stroke="#555a60" stroke-width="1"/>
<text x="1168.9" y="889.2" font-family="Liberation Sans" font-size="10.800" fill="#f25a5a" text-anchor="middle">-0.02</text>
<rect x="1204.5" y="889.5" width="70.0" height="8.0" fill="#f4777a" stroke="#555a60" stroke-width="1"/>
<text x="1238.9" y="889.2" font-family="Liberation Sans" font-size="10.800" fill="#f25a5a" text-anchor="middle">-0.08</text>
<rect x="1274.5" y="889.5" width="70.0" height="10.0" fill="#f4777a" stroke="#555a60" stroke-width="1"/>
<text x="1308.9" y="889.2" font-family="Liberation Sans" font-size="10.800" fill="#f25a5a" text-anchor="middle">-0.10</text>
<rect x="1344.5" y="889.5" width="70.0" height="9.0" fill="#f4777a" stroke="#555a60" stroke-width="1"/>
<text x="1378.9" y="889.2" font-family="Liberation Sans" font-size="10.800" fill="#f25a5a" text-anchor="middle">-0.09</text>
<rect x="1414.5" y="889.5" width="70.0" height="7.0" fill="#f4777a" stroke="#555a60" stroke-width="1"/>
<text x="1448.9" y="889.2" font-family="Liberation Sans" font-size="10.800" fill="#f25a5a" text-anchor="middle" opacity=".5">-0.07</text>
<rect x="1484.5" y="889.5" width="70.0" height="4.0" fill="#f4777a" stroke="#555a60" stroke-width="1"/>
<text x="1518.9" y="889.2" font-family="Liberation Sans" font-size="10.800" fill="#f25a5a" text-anchor="middle">-0.04</text>
<rect x="1554.5" y="889.5" width="70.0" height="2.0" fill="#f4777a" stroke="#555a60" stroke-width="1"/>
<text x="1588.9" y="889.2" font-family="Liberation Sans" font-size="10.800" fill="#f25a5a" text-anchor="middle">-0.02</text>
<rect x="1624.5" y="889.5" width="70.0" height="1.0" fill="#f4777a" stroke="#555a60" stroke-width="1"/>
<text x="1658.9" y="889.2" font-family="Liberation Sans" font-size="10.800" fill="#f25a5a" text-anchor="middle">-0.01</text>
<text x="1728.9" y="900.1" font-family="Liberation Sans" font-size="10.800" fill="#6868f2" text-anchor="middle">0.00</text>
<text x="1798.9" y="900.1" font-family="Liberation Sans" font-size="10.800" fill="#6868f2" text-anchor="middle">0.00</text>
<text x="1044" y="925.5" font-family="Liberation Sans" font-size="10.800" fill="#666" text-anchor="middle" letter-spacing=".3">Theta</text>
<text x="1880" y="925.5" font-family="Liberation Sans" font-size="10.800" fill="#666" text-anchor="middle" letter-spacing=".3">Theta</text>
<path d="M1069 921H1852" stroke="#555a60" stroke-width="1"/>
<rect x="1069.0" y="921.0" width="65.5" height="10.0" fill="#f4777a" stroke="#555a60" stroke-width="1"/>
<text x="1098.9" y="920.7" font-family="Liberation Sans" font-size="10.800" fill="#f25a5a" text-anchor="middle">-489.86</text>
<rect x="1134.5" y="921.0" width="70.0" height="6.6" fill="#f4777a" stroke="#555a60" stroke-width="1"/>
<text x="1168.9" y="920.7" font-family="Liberation Sans" font-size="10.800" fill="#f25a5a" text-anchor="middle">-322.12</text>
<rect x="1204.5" y="921.0" width="70.0" height="2.1" fill="#f4777a" stroke="#555a60" stroke-width="1"/>
<text x="1238.9" y="920.7" font-family="Liberation Sans" font-size="10.800" fill="#f25a5a" text-anchor="middle">-104.92</text>
<rect x="1274.5" y="919.7" width="70.0" height="1.3" fill="#5a7cff" stroke="#555a60" stroke-width="1"/>
<text x="1308.9" y="931.6" font-family="Liberation Sans" font-size="10.800" fill="#6868f2" text-anchor="middle">61.71</text>
<rect x="1344.5" y="918.3" width="70.0" height="2.7" fill="#5a7cff" stroke="#555a60" stroke-width="1"/>
<text x="1378.9" y="931.6" font-family="Liberation Sans" font-size="10.800" fill="#6868f2" text-anchor="middle">134.23</text>
<rect x="1414.5" y="918.3" width="70.0" height="2.7" fill="#5a7cff" stroke="#555a60" stroke-width="1"/>
<text x="1448.9" y="931.6" font-family="Liberation Sans" font-size="10.800" fill="#6868f2" text-anchor="middle" opacity=".5">131.46</text>
<rect x="1484.5" y="919.1" width="70.0" height="1.9" fill="#5a7cff" stroke="#555a60" stroke-width="1"/>
<text x="1518.9" y="931.6" font-family="Liberation Sans" font-size="10.800" fill="#6868f2" text-anchor="middle">95.22</text>
<rect x="1554.5" y="919.8" width="70.0" height="1.2" fill="#5a7cff" stroke="#555a60" stroke-width="1"/>
<text x="1588.9" y="931.6" font-family="Liberation Sans" font-size="10.800" fill="#6868f2" text-anchor="middle">56.73</text>
<rect x="1624.5" y="920.4" width="70.0" height="0.6" fill="#5a7cff" stroke="#555a60" stroke-width="1"/>
<text x="1658.9" y="931.6" font-family="Liberation Sans" font-size="10.800" fill="#6868f2" text-anchor="middle">28.78</text>
<text x="1728.9" y="931.6" font-family="Liberation Sans" font-size="10.800" fill="#6868f2" text-anchor="middle">12.38</text>
<text x="1798.9" y="931.6" font-family="Liberation Sans" font-size="10.800" fill="#6868f2" text-anchor="middle">4.27</text>
<text x="1044" y="957.7" font-family="Liberation Sans" font-size="10.800" fill="#666" text-anchor="middle" letter-spacing=".3">Vega</text>
<text x="1880" y="957.7" font-family="Liberation Sans" font-size="10.800" fill="#666" text-anchor="middle" letter-spacing=".3">Vega</text>
<path d="M1069 953.5H1852" stroke="#555a60" stroke-width="1"/>
<rect x="1069.0" y="944.0" width="65.5" height="9.5" fill="#5a7cff" stroke="#555a60" stroke-width="1"/>
<text x="1098.9" y="964.1" font-family="Liberation Sans" font-size="10.800" fill="#6868f2" text-anchor="middle">964.53</text>
<rect x="1134.5" y="950.3" width="70.0" height="3.2" fill="#5a7cff" stroke="#555a60" stroke-width="1"/>
<text x="1168.9" y="964.1" font-family="Liberation Sans" font-size="10.800" fill="#6868f2" text-anchor="middle">321.57</text>
<rect x="1204.5" y="953.5" width="70.0" height="3.6" fill="#f4777a" stroke="#555a60" stroke-width="1"/>
<text x="1238.9" y="953.2" font-family="Liberation Sans" font-size="10.800" fill="#f25a5a" text-anchor="middle">-365.38</text>
<rect x="1274.5" y="953.5" width="70.0" height="7.7" fill="#f4777a" stroke="#555a60" stroke-width="1"/>
<text x="1308.9" y="953.2" font-family="Liberation Sans" font-size="10.800" fill="#f25a5a" text-anchor="middle">-783.94</text>
<rect x="1344.5" y="953.5" width="70.0" height="8.4" fill="#f4777a" stroke="#555a60" stroke-width="1"/>
<text x="1378.9" y="953.2" font-family="Liberation Sans" font-size="10.800" fill="#f25a5a" text-anchor="middle">-851.00</text>
<rect x="1414.5" y="953.5" width="70.0" height="6.8" fill="#f4777a" stroke="#555a60" stroke-width="1"/>
<text x="1448.9" y="953.2" font-family="Liberation Sans" font-size="10.800" fill="#f25a5a" text-anchor="middle" opacity=".5">-687.75</text>
<rect x="1484.5" y="953.5" width="70.0" height="4.5" fill="#f4777a" stroke="#555a60" stroke-width="1"/>
<text x="1518.9" y="953.2" font-family="Liberation Sans" font-size="10.800" fill="#f25a5a" text-anchor="middle">-459.29</text>
<rect x="1554.5" y="953.5" width="70.0" height="2.6" fill="#f4777a" stroke="#555a60" stroke-width="1"/>
<text x="1588.9" y="953.2" font-family="Liberation Sans" font-size="10.800" fill="#f25a5a" text-anchor="middle">-266.33</text>
<rect x="1624.5" y="953.5" width="70.0" height="1.4" fill="#f4777a" stroke="#555a60" stroke-width="1"/>
<text x="1658.9" y="953.2" font-family="Liberation Sans" font-size="10.800" fill="#f25a5a" text-anchor="middle">-137.21</text>
<rect x="1694.5" y="953.5" width="70.0" height="0.6" fill="#f4777a" stroke="#555a60" stroke-width="1"/>
<text x="1728.9" y="953.2" font-family="Liberation Sans" font-size="10.800" fill="#f25a5a" text-anchor="middle">-62.87</text>
<text x="1798.9" y="953.2" font-family="Liberation Sans" font-size="10.800" fill="#f25a5a" text-anchor="middle">-25.08</text>
<rect x="1435.500" y="771.500" width="49" height="199" rx="5" fill="#eef2fa" fill-opacity=".82" stroke="#5d6b82"/>
<text x="1460" y="783.300" font-family="Liberation Sans" font-size="10.800" fill="#222" text-anchor="middle">6632.88</text>
<text x="1460.500" y="815.7" font-family="Liberation Sans" font-size="10.800" fill="#f00" text-anchor="middle">-2</text>
<text x="1460.500" y="830.5" font-family="Liberation Sans" font-size="10.800" fill="#f00" text-anchor="middle">0.0%</text>
<text x="1460.500" y="863.3" font-family="Liberation Sans" font-size="10.800" fill="#1a1af0" text-anchor="middle">19.85</text>
<text x="1460.500" y="895.3" font-family="Liberation Sans" font-size="10.800" fill="#f00" text-anchor="middle">-0.06</text>
<text x="1460.500" y="927.3" font-family="Liberation Sans" font-size="10.800" fill="#1a1af0" text-anchor="middle">126.74</text>
<text x="1460.500" y="959.3" font-family="Liberation Sans" font-size="10.800" fill="#f00" text-anchor="middle">-650.95</text>
</svg>
<div class="a" style="left:1013px;top:976px;width:893px;height:25px;background:#293955"></div>
<div class="t" style="left:1734px;top:981px;color:#fff;letter-spacing:0">89%</div>
<div class="a" style="left:1770px;top:988px;width:7px;height:1px;background:#fff"></div>
<div class="a" style="left:1784px;top:988px;width:40px;height:1px;background:#fbeea4"></div>
<div class="a" style="left:1824px;top:988px;width:57px;height:1px;background:#fff"></div>
<div class="a" style="left:1822px;top:984px;width:3px;height:10px;background:#fbeea4"></div>
<div class="a" style="left:1832px;top:985px;width:1px;height:8px;background:#fff"></div>
<div class="a" style="left:1888px;top:988px;width:7px;height:1px;background:#fff"></div><div class="a" style="left:1891px;top:985px;width:1px;height:7px;background:#fff"></div>
<div class="a" style="left:11px;top:1003px;width:1897px;height:1px;background:#b9c0d4"></div>
<div class="a" style="left:7px;top:1005px;width:1903px;height:1px;background:#293955"></div>
</body></html>
